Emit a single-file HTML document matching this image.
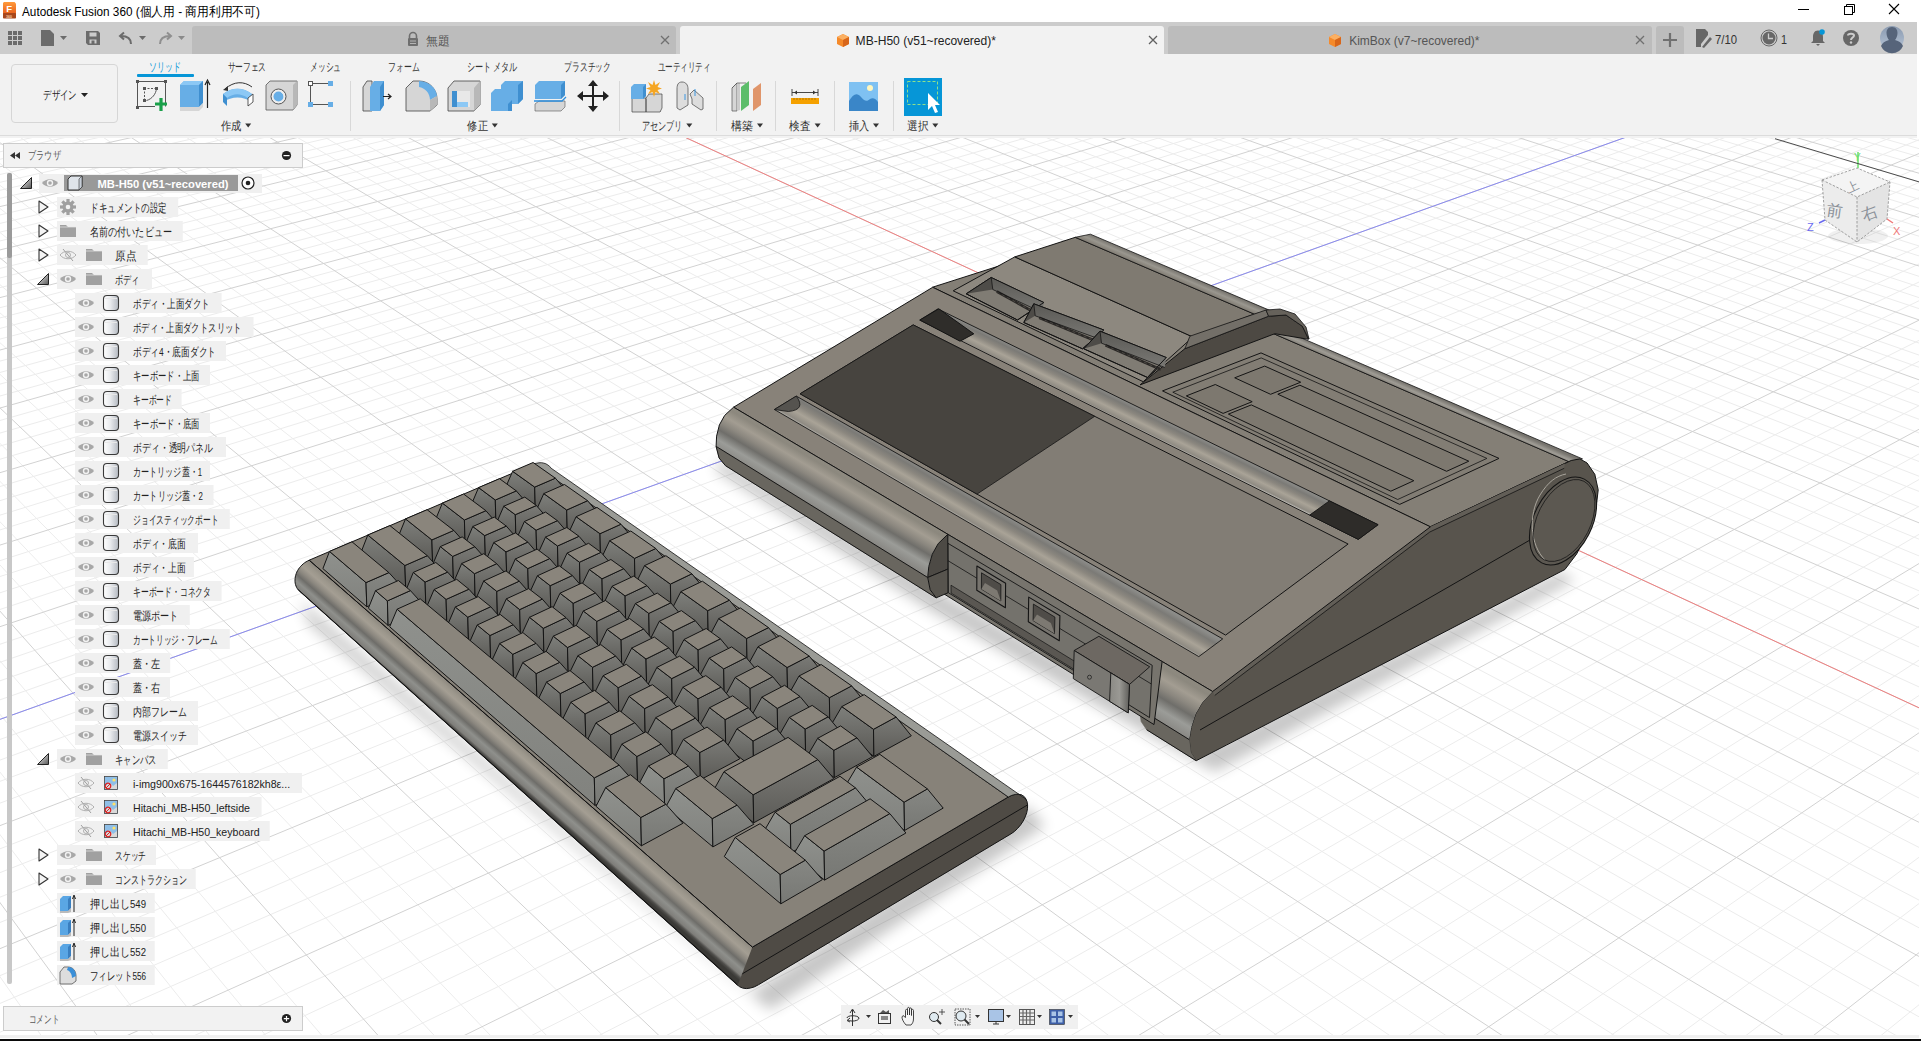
<!DOCTYPE html>
<html><head><meta charset="utf-8"><style>
html,body{margin:0;padding:0;width:1921px;height:1041px;overflow:hidden;background:#fff;font-family:"Liberation Sans", sans-serif}
div{box-sizing:border-box}
</style></head><body>
<div style="position:absolute;left:0;top:138px;width:1919px;height:897px;background:#ffffff"></div>
<svg style="position:absolute;left:0;top:0" width="1921" height="1041">
<defs><clipPath id="vp"><rect x="0" y="138" width="1919" height="897"/></clipPath></defs>
<g clip-path="url(#vp)">
<path d="M-798.3 230.3L1044.9 -136.5M-795.5 237.1L1054.7 -133.9M-792.6 244.0L1064.6 -131.2M-789.7 251.0L1074.5 -128.6M-783.8 265.2L1094.7 -123.2M-780.8 272.5L1104.9 -120.5M-777.7 279.8L1115.2 -117.8M-774.6 287.3L1125.6 -115.0M-768.2 302.7L1146.7 -109.4M-765.0 310.5L1157.3 -106.5M-761.7 318.4L1168.1 -103.7M-758.3 326.5L1179.0 -100.8M-751.5 343.0L1201.1 -94.9M-748.0 351.5L1212.3 -91.9M-744.4 360.1L1223.5 -88.9M-740.8 368.8L1234.9 -85.9M-733.4 386.7L1258.1 -79.7M-729.6 395.8L1269.8 -76.6M-725.7 405.2L1281.6 -73.5M-721.8 414.6L1293.6 -70.3M-713.7 434.0L1317.8 -63.8M-709.6 444.0L1330.1 -60.6M-705.4 454.1L1342.6 -57.3M-701.1 464.4L1355.1 -53.9M-692.3 485.6L1380.6 -47.1M-687.8 496.4L1393.5 -43.7M-683.2 507.5L1406.6 -40.2M-678.5 518.7L1419.7 -36.7M-668.9 541.8L1446.5 -29.6M-664.0 553.7L1460.1 -26.0M-659.0 565.8L1473.9 -22.3M-653.8 578.2L1487.7 -18.6M-643.3 603.6L1515.9 -11.1M-637.9 616.6L1530.3 -7.3M-632.3 630.0L1544.7 -3.4M-626.7 643.6L1559.4 0.5M-615.1 671.6L1589.1 8.4M-609.1 686.0L1604.2 12.4M-602.9 700.8L1619.5 16.4M-596.7 715.8L1634.9 20.6M-583.8 746.9L1666.3 28.9M-577.1 762.9L1682.3 33.2M-570.3 779.3L1698.4 37.5M-563.4 796.0L1714.7 41.8M-549.0 830.7L1747.9 50.6M-541.6 848.6L1764.8 55.1M-533.9 866.9L1781.9 59.7M-526.2 885.7L1799.1 64.3M-510.0 924.6L1834.3 73.6M-501.6 944.7L1852.2 78.4M-493.1 965.4L1870.3 83.2M-484.3 986.5L1888.6 88.1M-466.0 1030.5L1925.9 98.0M-456.6 1053.3L1944.9 103.1M-446.9 1076.7L1964.1 108.2M-436.9 1100.7L1983.6 113.4M-416.1 1150.8L2023.2 123.9M-405.3 1176.8L2043.4 129.3M-394.1 1203.6L2063.9 134.7M-382.7 1231.2L2084.6 140.2M-358.8 1288.7L2126.8 151.5M-346.3 1318.8L2148.3 157.2M-333.5 1349.7L2170.1 163.0M-320.2 1381.6L2192.2 168.9M-292.5 1448.4L2237.3 180.9M-278.0 1483.4L2260.2 187.0M-262.9 1519.6L2283.5 193.2M-247.4 1557.0L2307.1 199.5M-214.8 1635.5L2355.3 212.3M-197.6 1676.9L2379.9 218.8M-179.9 1719.7L2404.8 225.5M-161.4 1764.1L2430.1 232.2M-122.5 1857.8L2481.7 245.9M-102.0 1907.3L2508.1 253.0M-80.6 1958.8L2534.9 260.1M-58.4 2012.3L2562.0 267.3M-11.2 2126.0L2617.5 282.1M13.9 2186.4L2645.9 289.6M40.1 2249.5L2674.7 297.3M67.5 2315.3L2703.9 305.1M125.9 2456.2L2763.7 321.0M157.2 2531.6L2794.3 329.1M190.1 2610.6L2825.4 337.4M224.5 2693.6L2856.9 345.8M298.8 2872.5L2921.5 363.0M339.0 2969.2L2954.6 371.8M381.3 3071.2L2988.2 380.7M426.0 3178.9L3022.4 389.8M-773.1 218.2L558.5 3197.7M-745.6 212.7L639.7 3106.7M-718.3 207.3L717.2 3019.9M-691.3 202.0L791.3 2936.9M-638.3 191.5L930.1 2781.5M-612.2 186.4L995.2 2708.6M-586.5 181.3L1057.6 2638.7M-561.0 176.2L1117.6 2571.5M-510.8 166.3L1230.6 2444.9M-486.1 161.5L1283.9 2385.1M-461.7 156.6L1335.3 2327.6M-437.5 151.9L1384.8 2272.2M-390.0 142.5L1478.7 2167.0M-366.6 137.8L1523.2 2117.2M-343.4 133.3L1566.2 2069.0M-320.5 128.7L1607.8 2022.4M-275.4 119.8L1686.9 1933.8M-253.1 115.4L1724.6 1891.6M-231.1 111.1L1761.1 1850.6M-209.4 106.8L1796.6 1811.0M-166.5 98.3L1864.2 1735.2M-145.4 94.2L1896.6 1699.0M-124.4 90.0L1928.0 1663.8M-103.7 85.9L1958.5 1629.6M-62.9 77.9L2017.0 1564.1M-42.8 73.9L2045.1 1532.7M-22.9 70.0L2072.4 1502.1M-3.2 66.1L2098.9 1472.3M35.7 58.4L2150.0 1415.1M54.8 54.6L2174.6 1387.6M73.8 50.9L2198.5 1360.8M92.6 47.1L2221.9 1334.6M129.7 39.8L2266.9 1284.2M148.0 36.2L2288.6 1259.9M166.1 32.6L2309.7 1236.2M184.0 29.1L2330.4 1213.1M219.4 22.1L2370.3 1168.3M236.9 18.7L2389.6 1146.7M254.2 15.2L2408.5 1125.6M271.4 11.8L2426.9 1105.0M305.2 5.2L2462.6 1065.0M321.9 1.9L2479.9 1045.7M338.4 -1.4L2496.8 1026.7M354.8 -4.6L2513.3 1008.2M387.2 -11.0L2545.4 972.3M403.2 -14.2L2560.9 954.9M419.0 -17.3L2576.1 937.8M434.7 -20.4L2591.1 921.1M465.7 -26.5L2620.0 888.6M481.0 -29.6L2634.1 872.9M496.2 -32.6L2647.9 857.4M511.3 -35.5L2661.5 842.3M541.0 -41.4L2687.8 812.8M555.7 -44.3L2700.6 798.5M570.2 -47.2L2713.1 784.4M584.6 -50.0L2725.5 770.6M613.2 -55.7L2749.5 743.7M627.2 -58.4L2761.1 730.6M641.2 -61.2L2772.6 717.7M655.1 -63.9L2783.9 705.1M682.4 -69.4L2805.9 680.5M696.0 -72.0L2816.6 668.5M709.4 -74.7L2827.1 656.7M722.7 -77.3L2837.5 645.1M749.0 -82.5L2857.7 622.4M762.0 -85.1L2867.6 611.4M774.9 -87.6L2877.3 600.5M787.7 -90.1L2886.8 589.8M813.0 -95.1L2905.5 569.0M825.5 -97.6L2914.6 558.8M837.9 -100.1L2923.5 548.7M850.2 -102.5L2932.4 538.8M874.6 -107.3L2949.6 519.5M886.6 -109.7L2958.0 510.1M898.6 -112.0L2966.3 500.8M910.4 -114.4L2974.5 491.6M933.9 -119.0L2990.5 473.7M945.5 -121.3L2998.4 464.9M957.0 -123.6L3006.1 456.3M968.4 -125.8L3013.7 447.8M991.0 -130.3L3028.6 431.1M1002.2 -132.5L3035.9 422.9M1013.3 -134.7L3043.1 414.9M1024.3 -136.9L3050.1 406.9" stroke="#ececec" stroke-width="1" fill="none"/>
<path d="M-801.0 223.7L1035.2 -139.0M-786.8 258.0L1084.6 -125.9M-771.5 294.9L1136.1 -112.2M-754.9 334.7L1190.0 -97.9M-737.1 377.7L1246.4 -82.8M-717.8 424.2L1305.6 -67.1M-696.7 474.9L1367.8 -50.5M-673.8 530.2L1433.1 -33.2M-648.6 590.7L1501.8 -14.9M-620.9 657.4L1574.1 4.4M-590.3 731.2L1650.5 24.7M-556.3 813.2L1731.2 46.2M-518.2 904.9L1816.6 68.9M-475.3 1008.2L1907.1 93.0M-426.6 1125.4L2003.3 118.6M-370.9 1259.5L2105.6 145.8M-306.6 1414.5L2214.6 174.8M-231.4 1595.6L2331.0 205.8M-142.3 1810.0L2455.7 239.0M-35.2 2068.0L2589.6 274.6M96.0 2384.2L2733.6 313.0M260.7 2780.8L2889.0 354.3M473.4 3293.0L3057.1 399.1M-801.0 223.7L473.4 3293.0M-664.7 196.7L862.2 2857.5M-535.7 171.3L1175.2 2507.0M-413.6 147.1L1432.6 2218.7M-297.8 124.3L1648.0 1977.4M-187.8 102.5L1830.9 1772.5M-83.2 81.9L1988.2 1596.4M16.3 62.2L2124.8 1443.3M111.3 43.5L2244.6 1309.1M201.8 25.6L2350.6 1190.4M288.4 8.5L2444.9 1084.8M371.1 -7.9L2529.5 990.1M450.3 -23.5L2605.7 904.7M526.2 -38.5L2674.7 827.4M599.0 -52.9L2737.6 757.0M668.8 -66.7L2795.0 692.7M735.9 -79.9L2847.7 633.7M800.4 -92.6L2896.2 579.3M862.4 -104.9L2941.0 529.1M922.2 -116.7L2982.6 482.6M979.7 -128.1L3021.2 439.4M1035.2 -139.0L3057.1 399.1" stroke="#d2d2d2" stroke-width="1" fill="none"/>
<path d="M371.1 -7.9L2529.5 990.1" stroke="#f08080" stroke-width="1"/>
<path d="M-518.2 904.9L1816.6 68.9" stroke="#8a8af0" stroke-width="1"/>
<defs>
<linearGradient id="kf" x1="0" y1="0" x2="0" y2="1"><stop offset="0" stop-color="#7e7f7b"/><stop offset="1" stop-color="#5a5955"/></linearGradient>
<linearGradient id="kr" x1="0" y1="0" x2="0" y2="1"><stop offset="0" stop-color="#7a7a76"/><stop offset="1" stop-color="#5c5b57"/></linearGradient>
<linearGradient id="kf2" x1="0" y1="0" x2="0" y2="1"><stop offset="0" stop-color="#8f918d"/><stop offset="1" stop-color="#81827e"/></linearGradient>
<linearGradient id="kr2" x1="0" y1="0" x2="0" y2="1"><stop offset="0" stop-color="#868783"/><stop offset="1" stop-color="#777874"/></linearGradient>
<linearGradient id="slotwall" x1="0" y1="0" x2="0" y2="1"><stop offset="0" stop-color="#5a5955"/><stop offset="1" stop-color="#7a7975"/></linearGradient>
<linearGradient id="ubface" x1="0" y1="0" x2="1" y2="0"><stop offset="0" stop-color="#5e5a53"/><stop offset="0.7" stop-color="#55514a"/><stop offset="1" stop-color="#66625b"/></linearGradient>
<linearGradient id="swend" x1="0" y1="0" x2="1" y2="0"><stop offset="0" stop-color="#8a8984"/><stop offset="0.5" stop-color="#9a9994"/><stop offset="1" stop-color="#5f5e5a"/></linearGradient>
<filter id="blur8" x="-20%" y="-20%" width="140%" height="140%"><feGaussianBlur stdDeviation="7"/></filter>
</defs><g filter="url(#blur8)" opacity="0.22">
<polygon points="300.0,600.0 752.0,992.0 1027.0,806.0 1045.0,826.0 770.0,1010.0 310.0,625.0" fill="#000" />
<polygon points="722.0,460.0 940.0,592.0 1157.0,712.0 1197.0,752.0 1560.0,572.0 1575.0,580.0 1215.0,772.0 1140.0,730.0 930.0,610.0 715.0,470.0" fill="#000" />
</g><polygon points="752.4,947.1 1008.3,797.0 1011.8,795.3 1015.3,794.4 1018.6,794.3 1021.5,795.0 1023.9,796.5 1025.7,798.7 1027.0,801.5 1027.6,804.9 1027.5,808.7 1026.7,812.8 1025.2,816.9 1023.2,821.0 1020.6,824.9 1017.6,828.4 1014.4,831.5 1010.9,833.9 758.4,984.8 754.3,986.9 750.2,988.1 746.3,988.6 742.8,988.1 739.7,986.8 737.2,984.8 735.4,981.9 734.4,978.5 734.2,974.6 734.8,970.3 736.2,965.9 738.4,961.4 741.2,957.2 744.6,953.3 748.3,949.8" fill="#4f4b45" stroke="#141414" stroke-width="1.0" stroke-linejoin="round" />
<path d="M734.4 978.5L1027.6 804.9" stroke="#141414" stroke-width="1"/>
<defs><linearGradient id="g1" gradientUnits="userSpaceOnUse" x1="530.8" y1="753.6" x2="508.4" y2="779.3"><stop offset="0.000" stop-color="#8d887f"/><stop offset="0.140" stop-color="#9c978c"/><stop offset="0.260" stop-color="#a49e93"/><stop offset="0.420" stop-color="#8b877f"/><stop offset="0.550" stop-color="#6e6d69"/><stop offset="0.700" stop-color="#8f908c"/><stop offset="0.860" stop-color="#7f7e7a"/><stop offset="0.930" stop-color="#4e4d4a"/><stop offset="1.000" stop-color="#3a3936"/></linearGradient></defs><polygon points="309.2,560.2 752.4,947.1 737.7,985.3 299.2,590.8 298.2,589.8 297.3,588.6 296.6,587.4 296.0,586.0 295.5,584.6 295.2,583.1 295.0,581.6 295.0,580.1 295.1,578.5 295.3,576.9 295.7,575.3 296.2,573.7 296.8,572.1 297.6,570.6 298.5,569.1 299.5,567.7 300.7,566.3 301.9,565.1 303.2,563.9 304.6,562.8 306.1,561.8 307.6,561.0 309.2,560.2" fill="url(#g1)" />
<path d="M297.7 589.1L736.2 983.4" stroke="#141414" stroke-width="0.7"/>
<path d="M298.5 590.1L737.0 984.5" stroke="#141414" stroke-width="0.7"/>
<polyline points="309.2,560.2 307.6,561.0 306.1,561.8 304.6,562.8 303.2,563.9 301.9,565.1 300.7,566.3 299.5,567.7 298.5,569.1 297.6,570.6 296.8,572.1 296.2,573.7 295.7,575.3 295.3,576.9 295.1,578.5 295.0,580.1 295.0,581.6 295.2,583.1 295.5,584.6 296.0,586.0 296.6,587.4 297.3,588.6 298.2,589.8 299.2,590.8" fill="none" stroke="#141414" stroke-width="1"/>
<path d="M299.2 590.8L737.7 985.3" stroke="#141414" stroke-width="1"/>
<polygon points="309.2,560.2 752.4,947.1 1008.3,797.0 533.8,464.1" fill="#878279" stroke="#141414" stroke-width="1.0" stroke-linejoin="round" />
<polygon points="533.8,464.1 536.3,463.3 538.9,462.8 541.3,462.7 543.7,463.1 545.9,463.8 547.9,465.0 549.7,466.4 551.1,468.2 1026.1,799.3 1024.8,797.4 1023.1,795.9 1021.2,794.9 1018.9,794.3 1016.4,794.3 1013.8,794.7 1011.1,795.6 1008.3,797.0" fill="#9a9b96" stroke="#141414" stroke-width="0.8" stroke-linejoin="round" />
<path d="M309.2 560.2L752.4 947.1" stroke="#141414" stroke-width="1"/>
<polygon points="505.3,488.1 535.3,510.0 534.7,487.1 512.6,471.3" fill="url(#kf)" stroke="#141414" stroke-width="1.0" stroke-linejoin="round" />
<polygon points="535.3,510.0 569.6,494.9 555.4,478.2 534.7,487.1" fill="url(#kr)" stroke="#141414" stroke-width="1.0" stroke-linejoin="round" />
<polygon points="512.6,471.3 534.7,487.1 555.4,478.2 533.1,462.5" fill="#8a857c" stroke="#141414" stroke-width="1.0" stroke-linejoin="round" />
<polygon points="536.1,510.6 567.3,533.3 566.7,510.0 543.8,493.6" fill="url(#kf)" stroke="#141414" stroke-width="1.0" stroke-linejoin="round" />
<polygon points="567.3,533.3 601.9,517.7 587.6,500.7 566.7,510.0" fill="url(#kr)" stroke="#141414" stroke-width="1.0" stroke-linejoin="round" />
<polygon points="543.8,493.6 566.7,510.0 587.6,500.7 564.5,484.5" fill="#8a857c" stroke="#141414" stroke-width="1.0" stroke-linejoin="round" />
<polygon points="568.2,533.9 600.5,557.4 600.0,533.7 576.1,516.7" fill="url(#kf)" stroke="#141414" stroke-width="1.0" stroke-linejoin="round" />
<polygon points="600.5,557.4 635.5,541.4 621.0,524.2 600.0,533.7" fill="url(#kr)" stroke="#141414" stroke-width="1.0" stroke-linejoin="round" />
<polygon points="576.1,516.7 600.0,533.7 621.0,524.2 597.0,507.4" fill="#8a857c" stroke="#141414" stroke-width="1.0" stroke-linejoin="round" />
<polygon points="601.4,558.1 635.0,582.5 634.5,558.4 609.7,540.7" fill="url(#kf)" stroke="#141414" stroke-width="1.0" stroke-linejoin="round" />
<polygon points="635.0,582.5 670.3,565.9 655.8,548.5 634.5,558.4" fill="url(#kr)" stroke="#141414" stroke-width="1.0" stroke-linejoin="round" />
<polygon points="609.7,540.7 634.5,558.4 655.8,548.5 630.8,531.0" fill="#8a857c" stroke="#141414" stroke-width="1.0" stroke-linejoin="round" />
<polygon points="635.9,583.2 670.9,608.6 670.4,584.1 644.6,565.6" fill="url(#kf)" stroke="#141414" stroke-width="1.0" stroke-linejoin="round" />
<polygon points="670.9,608.6 706.5,591.5 691.9,573.8 670.4,584.1" fill="url(#kr)" stroke="#141414" stroke-width="1.0" stroke-linejoin="round" />
<polygon points="644.6,565.6 670.4,584.1 691.9,573.8 665.9,555.7" fill="#8a857c" stroke="#141414" stroke-width="1.0" stroke-linejoin="round" />
<polygon points="671.8,609.3 708.2,635.8 707.7,610.7 680.9,591.6" fill="url(#kf)" stroke="#141414" stroke-width="1.0" stroke-linejoin="round" />
<polygon points="708.2,635.8 744.2,618.0 729.4,600.2 707.7,610.7" fill="url(#kr)" stroke="#141414" stroke-width="1.0" stroke-linejoin="round" />
<polygon points="680.9,591.6 707.7,610.7 729.4,600.2 702.4,581.2" fill="#8a857c" stroke="#141414" stroke-width="1.0" stroke-linejoin="round" />
<polygon points="709.2,636.5 747.1,664.1 746.6,638.5 718.7,618.6" fill="url(#kf)" stroke="#141414" stroke-width="1.0" stroke-linejoin="round" />
<polygon points="747.1,664.1 783.4,645.6 768.5,627.6 746.6,638.5" fill="url(#kr)" stroke="#141414" stroke-width="1.0" stroke-linejoin="round" />
<polygon points="718.7,618.6 746.6,638.5 768.5,627.6 740.4,607.9" fill="#8a857c" stroke="#141414" stroke-width="1.0" stroke-linejoin="round" />
<polygon points="748.1,664.8 787.6,693.6 787.1,667.5 758.0,646.7" fill="url(#kf)" stroke="#141414" stroke-width="1.0" stroke-linejoin="round" />
<polygon points="787.6,693.6 824.3,674.4 809.2,656.1 787.1,667.5" fill="url(#kr)" stroke="#141414" stroke-width="1.0" stroke-linejoin="round" />
<polygon points="758.0,646.7 787.1,667.5 809.2,656.1 780.0,635.6" fill="#8a857c" stroke="#141414" stroke-width="1.0" stroke-linejoin="round" />
<polygon points="788.7,694.4 829.8,724.3 829.4,697.7 799.0,676.0" fill="url(#kf)" stroke="#141414" stroke-width="1.0" stroke-linejoin="round" />
<polygon points="829.8,724.3 866.9,704.5 851.7,685.9 829.4,697.7" fill="url(#kr)" stroke="#141414" stroke-width="1.0" stroke-linejoin="round" />
<polygon points="799.0,676.0 829.4,697.7 851.7,685.9 821.2,664.5" fill="#8a857c" stroke="#141414" stroke-width="1.0" stroke-linejoin="round" />
<polygon points="831.0,725.1 873.9,756.4 873.5,729.3 841.8,706.6" fill="url(#kf)" stroke="#141414" stroke-width="1.0" stroke-linejoin="round" />
<polygon points="873.9,756.4 911.3,735.8 896.1,717.0 873.5,729.3" fill="url(#kr)" stroke="#141414" stroke-width="1.0" stroke-linejoin="round" />
<polygon points="841.8,706.6 873.5,729.3 896.1,717.0 864.2,694.6" fill="#8a857c" stroke="#141414" stroke-width="1.0" stroke-linejoin="round" />
<polygon points="471.4,504.5 495.9,523.0 495.3,500.0 478.6,487.6" fill="url(#kf)" stroke="#141414" stroke-width="1.0" stroke-linejoin="round" />
<polygon points="495.9,523.0 530.8,507.7 516.3,490.9 495.3,500.0" fill="url(#kr)" stroke="#141414" stroke-width="1.0" stroke-linejoin="round" />
<polygon points="478.6,487.6 495.3,500.0 516.3,490.9 499.5,478.7" fill="#8a857c" stroke="#141414" stroke-width="1.0" stroke-linejoin="round" />
<polygon points="496.3,523.3 515.9,538.0 515.3,514.7 503.8,506.2" fill="url(#kf)" stroke="#141414" stroke-width="1.0" stroke-linejoin="round" />
<polygon points="515.9,538.0 551.0,522.4 536.4,505.5 515.3,514.7" fill="url(#kr)" stroke="#141414" stroke-width="1.0" stroke-linejoin="round" />
<polygon points="503.8,506.2 515.3,514.7 536.4,505.5 524.8,497.1" fill="#8a857c" stroke="#141414" stroke-width="1.0" stroke-linejoin="round" />
<polygon points="516.7,538.6 536.7,553.7 536.1,530.2 524.4,521.5" fill="url(#kf)" stroke="#141414" stroke-width="1.0" stroke-linejoin="round" />
<polygon points="536.7,553.7 572.1,537.8 557.4,520.7 536.1,530.2" fill="url(#kr)" stroke="#141414" stroke-width="1.0" stroke-linejoin="round" />
<polygon points="524.4,521.5 536.1,530.2 557.4,520.7 545.6,512.1" fill="#8a857c" stroke="#141414" stroke-width="1.0" stroke-linejoin="round" />
<polygon points="537.6,554.4 558.1,569.8 557.5,546.0 545.5,537.1" fill="url(#kf)" stroke="#141414" stroke-width="1.0" stroke-linejoin="round" />
<polygon points="558.1,569.8 593.7,553.5 579.0,536.3 557.5,546.0" fill="url(#kr)" stroke="#141414" stroke-width="1.0" stroke-linejoin="round" />
<polygon points="545.5,537.1 557.5,546.0 579.0,536.3 566.8,527.5" fill="#8a857c" stroke="#141414" stroke-width="1.0" stroke-linejoin="round" />
<polygon points="559.0,570.5 580.1,586.3 579.5,562.2 567.1,553.1" fill="url(#kf)" stroke="#141414" stroke-width="1.0" stroke-linejoin="round" />
<polygon points="580.1,586.3 615.9,569.7 601.0,552.3 579.5,562.2" fill="url(#kr)" stroke="#141414" stroke-width="1.0" stroke-linejoin="round" />
<polygon points="567.1,553.1 579.5,562.2 601.0,552.3 588.6,543.3" fill="#8a857c" stroke="#141414" stroke-width="1.0" stroke-linejoin="round" />
<polygon points="580.9,587.0 602.5,603.3 602.0,578.8 589.3,569.5" fill="url(#kf)" stroke="#141414" stroke-width="1.0" stroke-linejoin="round" />
<polygon points="602.5,603.3 638.6,586.2 623.7,568.7 602.0,578.8" fill="url(#kr)" stroke="#141414" stroke-width="1.0" stroke-linejoin="round" />
<polygon points="589.3,569.5 602.0,578.8 623.7,568.7 610.9,559.5" fill="#8a857c" stroke="#141414" stroke-width="1.0" stroke-linejoin="round" />
<polygon points="603.5,603.9 625.6,620.6 625.1,595.9 612.0,586.3" fill="url(#kf)" stroke="#141414" stroke-width="1.0" stroke-linejoin="round" />
<polygon points="625.6,620.6 661.9,603.2 646.9,585.6 625.1,595.9" fill="url(#kr)" stroke="#141414" stroke-width="1.0" stroke-linejoin="round" />
<polygon points="612.0,586.3 625.1,595.9 646.9,585.6 633.8,576.1" fill="#8a857c" stroke="#141414" stroke-width="1.0" stroke-linejoin="round" />
<polygon points="626.6,621.3 649.3,638.5 648.8,613.4 635.4,603.5" fill="url(#kf)" stroke="#141414" stroke-width="1.0" stroke-linejoin="round" />
<polygon points="649.3,638.5 685.8,620.7 670.8,602.8 648.8,613.4" fill="url(#kr)" stroke="#141414" stroke-width="1.0" stroke-linejoin="round" />
<polygon points="635.4,603.5 648.8,613.4 670.8,602.8 657.3,593.1" fill="#8a857c" stroke="#141414" stroke-width="1.0" stroke-linejoin="round" />
<polygon points="650.3,639.2 673.6,656.8 673.1,631.4 659.3,621.3" fill="url(#kf)" stroke="#141414" stroke-width="1.0" stroke-linejoin="round" />
<polygon points="673.6,656.8 710.4,638.5 695.2,620.6 673.1,631.4" fill="url(#kr)" stroke="#141414" stroke-width="1.0" stroke-linejoin="round" />
<polygon points="659.3,621.3 673.1,631.4 695.2,620.6 681.4,610.6" fill="#8a857c" stroke="#141414" stroke-width="1.0" stroke-linejoin="round" />
<polygon points="674.6,657.5 698.6,675.6 698.1,649.9 684.0,639.5" fill="url(#kf)" stroke="#141414" stroke-width="1.0" stroke-linejoin="round" />
<polygon points="698.6,675.6 735.6,656.9 720.4,638.8 698.1,649.9" fill="url(#kr)" stroke="#141414" stroke-width="1.0" stroke-linejoin="round" />
<polygon points="684.0,639.5 698.1,649.9 720.4,638.8 706.2,628.5" fill="#8a857c" stroke="#141414" stroke-width="1.0" stroke-linejoin="round" />
<polygon points="699.6,676.3 724.2,694.9 723.7,668.9 709.2,658.1" fill="url(#kf)" stroke="#141414" stroke-width="1.0" stroke-linejoin="round" />
<polygon points="724.2,694.9 761.5,675.8 746.2,657.5 723.7,668.9" fill="url(#kr)" stroke="#141414" stroke-width="1.0" stroke-linejoin="round" />
<polygon points="709.2,658.1 723.7,668.9 746.2,657.5 731.6,646.9" fill="#8a857c" stroke="#141414" stroke-width="1.0" stroke-linejoin="round" />
<polygon points="725.3,695.7 750.6,714.7 750.1,688.4 735.2,677.4" fill="url(#kf)" stroke="#141414" stroke-width="1.0" stroke-linejoin="round" />
<polygon points="750.6,714.7 788.1,695.2 772.7,676.7 750.1,688.4" fill="url(#kr)" stroke="#141414" stroke-width="1.0" stroke-linejoin="round" />
<polygon points="735.2,677.4 750.1,688.4 772.7,676.7 757.7,665.9" fill="#8a857c" stroke="#141414" stroke-width="1.0" stroke-linejoin="round" />
<polygon points="751.7,715.5 777.7,735.1 777.3,708.4 761.9,697.1" fill="url(#kf)" stroke="#141414" stroke-width="1.0" stroke-linejoin="round" />
<polygon points="777.7,735.1 815.5,715.1 800.0,696.5 777.3,708.4" fill="url(#kr)" stroke="#141414" stroke-width="1.0" stroke-linejoin="round" />
<polygon points="761.9,697.1 777.3,708.4 800.0,696.5 784.6,685.3" fill="#8a857c" stroke="#141414" stroke-width="1.0" stroke-linejoin="round" />
<polygon points="778.8,736.0 805.6,756.1 805.2,729.1 789.4,717.4" fill="url(#kf)" stroke="#141414" stroke-width="1.0" stroke-linejoin="round" />
<polygon points="805.6,756.1 843.6,735.6 828.1,716.8 805.2,729.1" fill="url(#kr)" stroke="#141414" stroke-width="1.0" stroke-linejoin="round" />
<polygon points="789.4,717.4 805.2,729.1 828.1,716.8 812.2,705.4" fill="#8a857c" stroke="#141414" stroke-width="1.0" stroke-linejoin="round" />
<polygon points="806.7,757.0 834.3,777.7 833.9,750.3 817.7,738.3" fill="url(#kf)" stroke="#141414" stroke-width="1.0" stroke-linejoin="round" />
<polygon points="834.3,777.7 872.5,756.7 856.9,737.8 833.9,750.3" fill="url(#kr)" stroke="#141414" stroke-width="1.0" stroke-linejoin="round" />
<polygon points="817.7,738.3 833.9,750.3 856.9,737.8 840.6,725.9" fill="#8a857c" stroke="#141414" stroke-width="1.0" stroke-linejoin="round" />
<polygon points="845.3,786.0 904.5,830.5 904.1,802.2 856.6,767.1" fill="url(#kf2)" stroke="#141414" stroke-width="1.0" stroke-linejoin="round" />
<polygon points="904.5,830.5 943.2,808.1 927.4,788.9 904.1,802.2" fill="url(#kr2)" stroke="#141414" stroke-width="1.0" stroke-linejoin="round" />
<polygon points="856.6,767.1 904.1,802.2 927.4,788.9 879.8,754.3" fill="#8a857c" stroke="#141414" stroke-width="1.0" stroke-linejoin="round" />
<polygon points="435.3,520.1 465.1,543.3 464.4,520.0 442.4,503.1" fill="url(#kf)" stroke="#141414" stroke-width="1.0" stroke-linejoin="round" />
<polygon points="465.1,543.3 500.6,527.6 485.9,510.7 464.4,520.0" fill="url(#kr)" stroke="#141414" stroke-width="1.0" stroke-linejoin="round" />
<polygon points="442.4,503.1 464.4,520.0 485.9,510.7 463.6,494.0" fill="#8a857c" stroke="#141414" stroke-width="1.0" stroke-linejoin="round" />
<polygon points="465.5,543.6 485.4,559.1 484.7,535.6 472.8,526.5" fill="url(#kf)" stroke="#141414" stroke-width="1.0" stroke-linejoin="round" />
<polygon points="485.4,559.1 521.2,543.1 506.3,526.1 484.7,535.6" fill="url(#kr)" stroke="#141414" stroke-width="1.0" stroke-linejoin="round" />
<polygon points="472.8,526.5 484.7,535.6 506.3,526.1 494.3,517.1" fill="#8a857c" stroke="#141414" stroke-width="1.0" stroke-linejoin="round" />
<polygon points="486.2,559.8 506.7,575.7 506.0,551.9 493.8,542.5" fill="url(#kf)" stroke="#141414" stroke-width="1.0" stroke-linejoin="round" />
<polygon points="506.7,575.7 542.7,559.4 527.8,542.1 506.0,551.9" fill="url(#kr)" stroke="#141414" stroke-width="1.0" stroke-linejoin="round" />
<polygon points="493.8,542.5 506.0,551.9 527.8,542.1 515.5,532.9" fill="#8a857c" stroke="#141414" stroke-width="1.0" stroke-linejoin="round" />
<polygon points="507.5,576.4 528.5,592.7 527.8,568.6 515.3,559.0" fill="url(#kf)" stroke="#141414" stroke-width="1.0" stroke-linejoin="round" />
<polygon points="528.5,592.7 564.8,576.0 549.7,558.6 527.8,568.6" fill="url(#kr)" stroke="#141414" stroke-width="1.0" stroke-linejoin="round" />
<polygon points="515.3,559.0 527.8,568.6 549.7,558.6 537.1,549.1" fill="#8a857c" stroke="#141414" stroke-width="1.0" stroke-linejoin="round" />
<polygon points="529.3,593.4 550.8,610.2 550.2,585.7 537.4,575.8" fill="url(#kf)" stroke="#141414" stroke-width="1.0" stroke-linejoin="round" />
<polygon points="550.8,610.2 587.4,593.0 572.3,575.5 550.2,585.7" fill="url(#kr)" stroke="#141414" stroke-width="1.0" stroke-linejoin="round" />
<polygon points="537.4,575.8 550.2,585.7 572.3,575.5 559.3,565.8" fill="#8a857c" stroke="#141414" stroke-width="1.0" stroke-linejoin="round" />
<polygon points="551.7,610.8 573.8,628.1 573.2,603.3 560.0,593.2" fill="url(#kf)" stroke="#141414" stroke-width="1.0" stroke-linejoin="round" />
<polygon points="573.8,628.1 610.7,610.6 595.4,592.9 573.2,603.3" fill="url(#kr)" stroke="#141414" stroke-width="1.0" stroke-linejoin="round" />
<polygon points="560.0,593.2 573.2,603.3 595.4,592.9 582.1,582.9" fill="#8a857c" stroke="#141414" stroke-width="1.0" stroke-linejoin="round" />
<polygon points="574.7,628.8 597.4,646.5 596.8,621.4 583.3,611.0" fill="url(#kf)" stroke="#141414" stroke-width="1.0" stroke-linejoin="round" />
<polygon points="597.4,646.5 634.5,628.5 619.2,610.7 596.8,621.4" fill="url(#kr)" stroke="#141414" stroke-width="1.0" stroke-linejoin="round" />
<polygon points="583.3,611.0 596.8,621.4 619.2,610.7 605.5,600.5" fill="#8a857c" stroke="#141414" stroke-width="1.0" stroke-linejoin="round" />
<polygon points="598.4,647.2 621.7,665.4 621.1,639.9 607.1,629.3" fill="url(#kf)" stroke="#141414" stroke-width="1.0" stroke-linejoin="round" />
<polygon points="621.7,665.4 659.1,647.0 643.6,629.0 621.1,639.9" fill="url(#kr)" stroke="#141414" stroke-width="1.0" stroke-linejoin="round" />
<polygon points="607.1,629.3 621.1,639.9 643.6,629.0 629.6,618.5" fill="#8a857c" stroke="#141414" stroke-width="1.0" stroke-linejoin="round" />
<polygon points="622.6,666.1 646.6,684.8 646.0,659.0 631.7,648.1" fill="url(#kf)" stroke="#141414" stroke-width="1.0" stroke-linejoin="round" />
<polygon points="646.6,684.8 684.2,666.0 668.7,647.8 646.0,659.0" fill="url(#kr)" stroke="#141414" stroke-width="1.0" stroke-linejoin="round" />
<polygon points="631.7,648.1 646.0,659.0 668.7,647.8 654.3,637.0" fill="#8a857c" stroke="#141414" stroke-width="1.0" stroke-linejoin="round" />
<polygon points="647.6,685.5 672.2,704.7 671.7,678.6 656.9,667.4" fill="url(#kf)" stroke="#141414" stroke-width="1.0" stroke-linejoin="round" />
<polygon points="672.2,704.7 710.1,685.5 694.5,667.2 671.7,678.6" fill="url(#kr)" stroke="#141414" stroke-width="1.0" stroke-linejoin="round" />
<polygon points="656.9,667.4 671.7,678.6 694.5,667.2 679.7,656.1" fill="#8a857c" stroke="#141414" stroke-width="1.0" stroke-linejoin="round" />
<polygon points="673.2,705.5 698.6,725.3 698.0,698.8 682.9,687.2" fill="url(#kf)" stroke="#141414" stroke-width="1.0" stroke-linejoin="round" />
<polygon points="698.6,725.3 736.7,705.5 721.0,687.1 698.0,698.8" fill="url(#kr)" stroke="#141414" stroke-width="1.0" stroke-linejoin="round" />
<polygon points="682.9,687.2 698.0,698.8 721.0,687.1 705.8,675.6" fill="#8a857c" stroke="#141414" stroke-width="1.0" stroke-linejoin="round" />
<polygon points="699.6,726.1 725.7,746.4 725.2,719.6 709.6,707.7" fill="url(#kf)" stroke="#141414" stroke-width="1.0" stroke-linejoin="round" />
<polygon points="725.7,746.4 764.1,726.2 748.3,707.6 725.2,719.6" fill="url(#kr)" stroke="#141414" stroke-width="1.0" stroke-linejoin="round" />
<polygon points="709.6,707.7 725.2,719.6 748.3,707.6 732.6,695.8" fill="#8a857c" stroke="#141414" stroke-width="1.0" stroke-linejoin="round" />
<polygon points="726.8,747.3 753.6,768.2 753.1,741.0 737.0,728.7" fill="url(#kf)" stroke="#141414" stroke-width="1.0" stroke-linejoin="round" />
<polygon points="753.6,768.2 792.3,747.4 776.4,728.6 753.1,741.0" fill="url(#kr)" stroke="#141414" stroke-width="1.0" stroke-linejoin="round" />
<polygon points="737.0,728.7 753.1,741.0 776.4,728.6 760.3,716.5" fill="#8a857c" stroke="#141414" stroke-width="1.0" stroke-linejoin="round" />
<polygon points="713.5,790.4 753.7,822.8 753.2,794.8 724.0,771.6" fill="url(#kf)" stroke="#141414" stroke-width="1.0" stroke-linejoin="round" />
<polygon points="753.7,822.8 833.8,778.6 817.8,759.6 753.2,794.8" fill="url(#kr)" stroke="#141414" stroke-width="1.0" stroke-linejoin="round" />
<polygon points="724.0,771.6 753.2,794.8 817.8,759.6 788.1,737.4" fill="#8a857c" stroke="#141414" stroke-width="1.0" stroke-linejoin="round" />
<polygon points="764.0,831.2 790.9,852.9 790.4,824.3 775.1,812.2" fill="url(#kf2)" stroke="#141414" stroke-width="1.0" stroke-linejoin="round" />
<polygon points="790.9,852.9 871.6,807.2 855.5,787.9 790.4,824.3" fill="url(#kr2)" stroke="#141414" stroke-width="1.0" stroke-linejoin="round" />
<polygon points="775.1,812.2 790.4,824.3 855.5,787.9 840.0,776.3" fill="#8a857c" stroke="#141414" stroke-width="1.0" stroke-linejoin="round" />
<polygon points="793.3,854.8 824.6,880.1 824.1,851.1 804.7,835.7" fill="url(#kf2)" stroke="#141414" stroke-width="1.0" stroke-linejoin="round" />
<polygon points="824.6,880.1 905.9,833.0 889.8,813.6 824.1,851.1" fill="url(#kr2)" stroke="#141414" stroke-width="1.0" stroke-linejoin="round" />
<polygon points="804.7,835.7 824.1,851.1 889.8,813.6 870.1,798.8" fill="#8a857c" stroke="#141414" stroke-width="1.0" stroke-linejoin="round" />
<polygon points="398.5,536.0 432.6,563.5 431.9,539.9 405.5,518.9" fill="url(#kf)" stroke="#141414" stroke-width="1.0" stroke-linejoin="round" />
<polygon points="432.6,563.5 468.9,547.5 453.8,530.4 431.9,539.9" fill="url(#kr)" stroke="#141414" stroke-width="1.0" stroke-linejoin="round" />
<polygon points="405.5,518.9 431.9,539.9 453.8,530.4 427.1,509.7" fill="#8a857c" stroke="#141414" stroke-width="1.0" stroke-linejoin="round" />
<polygon points="433.0,563.8 453.4,580.3 452.7,556.4 440.3,546.6" fill="url(#kf)" stroke="#141414" stroke-width="1.0" stroke-linejoin="round" />
<polygon points="453.4,580.3 490.0,563.9 474.8,546.7 452.7,556.4" fill="url(#kr)" stroke="#141414" stroke-width="1.0" stroke-linejoin="round" />
<polygon points="440.3,546.6 452.7,556.4 474.8,546.7 462.2,536.9" fill="#8a857c" stroke="#141414" stroke-width="1.0" stroke-linejoin="round" />
<polygon points="454.2,580.9 475.1,597.8 474.5,573.7 461.7,563.5" fill="url(#kf)" stroke="#141414" stroke-width="1.0" stroke-linejoin="round" />
<polygon points="475.1,597.8 512.0,581.0 496.7,563.7 474.5,573.7" fill="url(#kr)" stroke="#141414" stroke-width="1.0" stroke-linejoin="round" />
<polygon points="461.7,563.5 474.5,573.7 496.7,563.7 483.8,553.7" fill="#8a857c" stroke="#141414" stroke-width="1.0" stroke-linejoin="round" />
<polygon points="476.0,598.5 497.4,615.9 496.8,591.4 483.7,581.0" fill="url(#kf)" stroke="#141414" stroke-width="1.0" stroke-linejoin="round" />
<polygon points="497.4,615.9 534.6,598.7 519.2,581.2 496.8,591.4" fill="url(#kr)" stroke="#141414" stroke-width="1.0" stroke-linejoin="round" />
<polygon points="483.7,581.0 496.8,591.4 519.2,581.2 506.0,570.9" fill="#8a857c" stroke="#141414" stroke-width="1.0" stroke-linejoin="round" />
<polygon points="498.3,616.5 520.4,634.4 519.7,609.6 506.3,598.9" fill="url(#kf)" stroke="#141414" stroke-width="1.0" stroke-linejoin="round" />
<polygon points="520.4,634.4 557.8,616.8 542.3,599.1 519.7,609.6" fill="url(#kr)" stroke="#141414" stroke-width="1.0" stroke-linejoin="round" />
<polygon points="506.3,598.9 519.7,609.6 542.3,599.1 528.7,588.6" fill="#8a857c" stroke="#141414" stroke-width="1.0" stroke-linejoin="round" />
<polygon points="521.3,635.1 543.9,653.4 543.3,628.3 529.5,617.3" fill="url(#kf)" stroke="#141414" stroke-width="1.0" stroke-linejoin="round" />
<polygon points="543.9,653.4 581.7,635.4 566.0,617.6 543.3,628.3" fill="url(#kr)" stroke="#141414" stroke-width="1.0" stroke-linejoin="round" />
<polygon points="529.5,617.3 543.3,628.3 566.0,617.6 552.1,606.7" fill="#8a857c" stroke="#141414" stroke-width="1.0" stroke-linejoin="round" />
<polygon points="544.9,654.1 568.2,673.0 567.5,647.5 553.3,636.2" fill="url(#kf)" stroke="#141414" stroke-width="1.0" stroke-linejoin="round" />
<polygon points="568.2,673.0 606.2,654.5 590.5,636.5 567.5,647.5" fill="url(#kr)" stroke="#141414" stroke-width="1.0" stroke-linejoin="round" />
<polygon points="553.3,636.2 567.5,647.5 590.5,636.5 576.1,625.4" fill="#8a857c" stroke="#141414" stroke-width="1.0" stroke-linejoin="round" />
<polygon points="569.1,673.7 593.1,693.1 592.5,667.3 577.9,655.7" fill="url(#kf)" stroke="#141414" stroke-width="1.0" stroke-linejoin="round" />
<polygon points="593.1,693.1 631.4,674.2 615.6,656.0 592.5,667.3" fill="url(#kr)" stroke="#141414" stroke-width="1.0" stroke-linejoin="round" />
<polygon points="577.9,655.7 592.5,667.3 615.6,656.0 600.8,644.6" fill="#8a857c" stroke="#141414" stroke-width="1.0" stroke-linejoin="round" />
<polygon points="594.1,693.9 618.8,713.8 618.2,687.7 603.1,675.7" fill="url(#kf)" stroke="#141414" stroke-width="1.0" stroke-linejoin="round" />
<polygon points="618.8,713.8 657.3,694.4 641.4,676.1 618.2,687.7" fill="url(#kr)" stroke="#141414" stroke-width="1.0" stroke-linejoin="round" />
<polygon points="603.1,675.7 618.2,687.7 641.4,676.1 626.3,664.3" fill="#8a857c" stroke="#141414" stroke-width="1.0" stroke-linejoin="round" />
<polygon points="619.7,714.6 645.2,735.2 644.6,708.6 629.1,696.3" fill="url(#kf)" stroke="#141414" stroke-width="1.0" stroke-linejoin="round" />
<polygon points="645.2,735.2 684.0,715.2 668.0,696.8 644.6,708.6" fill="url(#kr)" stroke="#141414" stroke-width="1.0" stroke-linejoin="round" />
<polygon points="629.1,696.3 644.6,708.6 668.0,696.8 652.4,684.7" fill="#8a857c" stroke="#141414" stroke-width="1.0" stroke-linejoin="round" />
<polygon points="646.2,736.0 672.4,757.1 671.8,730.2 655.8,717.6" fill="url(#kf)" stroke="#141414" stroke-width="1.0" stroke-linejoin="round" />
<polygon points="672.4,757.1 711.5,736.7 695.4,718.1 671.8,730.2" fill="url(#kr)" stroke="#141414" stroke-width="1.0" stroke-linejoin="round" />
<polygon points="655.8,717.6 671.8,730.2 695.4,718.1 679.3,705.6" fill="#8a857c" stroke="#141414" stroke-width="1.0" stroke-linejoin="round" />
<polygon points="673.4,758.0 700.4,779.8 699.8,752.5 683.4,739.4" fill="url(#kf)" stroke="#141414" stroke-width="1.0" stroke-linejoin="round" />
<polygon points="700.4,779.8 739.8,758.8 723.6,740.0 699.8,752.5" fill="url(#kr)" stroke="#141414" stroke-width="1.0" stroke-linejoin="round" />
<polygon points="683.4,739.4 699.8,752.5 723.6,740.0 707.1,727.1" fill="#8a857c" stroke="#141414" stroke-width="1.0" stroke-linejoin="round" />
<polygon points="361.1,552.1 405.7,589.5 404.9,565.5 367.8,535.0" fill="url(#kf)" stroke="#141414" stroke-width="1.0" stroke-linejoin="round" />
<polygon points="405.7,589.5 442.8,572.9 427.3,555.7 404.9,565.5" fill="url(#kr)" stroke="#141414" stroke-width="1.0" stroke-linejoin="round" />
<polygon points="367.8,535.0 404.9,565.5 427.3,555.7 389.9,525.6" fill="#8a857c" stroke="#141414" stroke-width="1.0" stroke-linejoin="round" />
<polygon points="406.1,589.8 425.8,606.3 425.1,582.1 413.3,572.4" fill="url(#kf)" stroke="#141414" stroke-width="1.0" stroke-linejoin="round" />
<polygon points="425.8,606.3 463.2,589.4 447.6,572.1 425.1,582.1" fill="url(#kr)" stroke="#141414" stroke-width="1.0" stroke-linejoin="round" />
<polygon points="413.3,572.4 425.1,582.1 447.6,572.1 435.8,562.5" fill="#8a857c" stroke="#141414" stroke-width="1.0" stroke-linejoin="round" />
<polygon points="426.6,607.0 446.8,624.0 446.1,599.4 434.1,589.5" fill="url(#kf)" stroke="#141414" stroke-width="1.0" stroke-linejoin="round" />
<polygon points="446.8,624.0 484.6,606.7 468.9,589.2 446.1,599.4" fill="url(#kr)" stroke="#141414" stroke-width="1.0" stroke-linejoin="round" />
<polygon points="434.1,589.5 446.1,599.4 468.9,589.2 456.7,579.3" fill="#8a857c" stroke="#141414" stroke-width="1.0" stroke-linejoin="round" />
<polygon points="447.7,624.7 468.5,642.1 467.8,617.2 455.3,607.0" fill="url(#kf)" stroke="#141414" stroke-width="1.0" stroke-linejoin="round" />
<polygon points="468.5,642.1 506.5,624.4 490.7,606.7 467.8,617.2" fill="url(#kr)" stroke="#141414" stroke-width="1.0" stroke-linejoin="round" />
<polygon points="455.3,607.0 467.8,617.2 490.7,606.7 478.2,596.6" fill="#8a857c" stroke="#141414" stroke-width="1.0" stroke-linejoin="round" />
<polygon points="469.3,642.8 490.6,660.7 490.0,635.5 477.2,625.0" fill="url(#kf)" stroke="#141414" stroke-width="1.0" stroke-linejoin="round" />
<polygon points="490.6,660.7 529.0,642.6 513.1,624.7 490.0,635.5" fill="url(#kr)" stroke="#141414" stroke-width="1.0" stroke-linejoin="round" />
<polygon points="477.2,625.0 490.0,635.5 513.1,624.7 500.2,614.4" fill="#8a857c" stroke="#141414" stroke-width="1.0" stroke-linejoin="round" />
<polygon points="491.5,661.4 513.5,679.8 512.8,654.3 499.7,643.5" fill="url(#kf)" stroke="#141414" stroke-width="1.0" stroke-linejoin="round" />
<polygon points="513.5,679.8 552.1,661.2 536.0,643.3 512.8,654.3" fill="url(#kr)" stroke="#141414" stroke-width="1.0" stroke-linejoin="round" />
<polygon points="499.7,643.5 512.8,654.3 536.0,643.3 522.9,632.6" fill="#8a857c" stroke="#141414" stroke-width="1.0" stroke-linejoin="round" />
<polygon points="514.4,680.6 536.9,699.4 536.2,673.6 522.8,662.5" fill="url(#kf)" stroke="#141414" stroke-width="1.0" stroke-linejoin="round" />
<polygon points="536.9,699.4 575.8,680.4 559.7,662.3 536.2,673.6" fill="url(#kr)" stroke="#141414" stroke-width="1.0" stroke-linejoin="round" />
<polygon points="522.8,662.5 536.2,673.6 559.7,662.3 546.1,651.4" fill="#8a857c" stroke="#141414" stroke-width="1.0" stroke-linejoin="round" />
<polygon points="537.8,700.2 561.0,719.6 560.3,693.5 546.5,682.1" fill="url(#kf)" stroke="#141414" stroke-width="1.0" stroke-linejoin="round" />
<polygon points="561.0,719.6 600.2,700.2 584.0,681.9 560.3,693.5" fill="url(#kr)" stroke="#141414" stroke-width="1.0" stroke-linejoin="round" />
<polygon points="546.5,682.1 560.3,693.5 584.0,681.9 570.0,670.6" fill="#8a857c" stroke="#141414" stroke-width="1.0" stroke-linejoin="round" />
<polygon points="562.0,720.4 585.8,740.4 585.1,713.9 570.9,702.2" fill="url(#kf)" stroke="#141414" stroke-width="1.0" stroke-linejoin="round" />
<polygon points="585.8,740.4 625.3,720.4 609.0,702.0 585.1,713.9" fill="url(#kr)" stroke="#141414" stroke-width="1.0" stroke-linejoin="round" />
<polygon points="570.9,702.2 585.1,713.9 609.0,702.0 594.6,690.4" fill="#8a857c" stroke="#141414" stroke-width="1.0" stroke-linejoin="round" />
<polygon points="586.8,741.2 611.3,761.8 610.7,734.9 596.0,722.8" fill="url(#kf)" stroke="#141414" stroke-width="1.0" stroke-linejoin="round" />
<polygon points="611.3,761.8 651.1,741.3 634.7,722.7 610.7,734.9" fill="url(#kr)" stroke="#141414" stroke-width="1.0" stroke-linejoin="round" />
<polygon points="596.0,722.8 610.7,734.9 634.7,722.7 619.9,710.8" fill="#8a857c" stroke="#141414" stroke-width="1.0" stroke-linejoin="round" />
<polygon points="612.3,762.6 637.6,783.8 636.9,756.5 621.9,744.1" fill="url(#kf)" stroke="#141414" stroke-width="1.0" stroke-linejoin="round" />
<polygon points="637.6,783.8 677.6,762.8 661.1,744.0 636.9,756.5" fill="url(#kr)" stroke="#141414" stroke-width="1.0" stroke-linejoin="round" />
<polygon points="621.9,744.1 636.9,756.5 661.1,744.0 645.9,731.8" fill="#8a857c" stroke="#141414" stroke-width="1.0" stroke-linejoin="round" />
<polygon points="638.6,784.7 664.6,806.5 664.0,778.8 648.5,766.0" fill="url(#kf2)" stroke="#141414" stroke-width="1.0" stroke-linejoin="round" />
<polygon points="664.6,806.5 705.0,784.9 688.4,766.0 664.0,778.8" fill="url(#kr2)" stroke="#141414" stroke-width="1.0" stroke-linejoin="round" />
<polygon points="648.5,766.0 664.0,778.8 688.4,766.0 672.7,753.4" fill="#8a857c" stroke="#141414" stroke-width="1.0" stroke-linejoin="round" />
<polygon points="665.6,807.3 712.9,846.9 712.3,818.6 675.8,788.5" fill="url(#kf2)" stroke="#141414" stroke-width="1.0" stroke-linejoin="round" />
<polygon points="712.9,846.9 753.8,824.3 737.0,805.1 712.3,818.6" fill="url(#kr2)" stroke="#141414" stroke-width="1.0" stroke-linejoin="round" />
<polygon points="675.8,788.5 712.3,818.6 737.0,805.1 700.2,775.5" fill="#8a857c" stroke="#141414" stroke-width="1.0" stroke-linejoin="round" />
<polygon points="724.3,856.5 780.8,903.8 780.2,874.5 735.2,837.4" fill="url(#kf2)" stroke="#141414" stroke-width="1.0" stroke-linejoin="round" />
<polygon points="780.8,903.8 822.3,879.7 805.3,860.2 780.2,874.5" fill="url(#kr2)" stroke="#141414" stroke-width="1.0" stroke-linejoin="round" />
<polygon points="735.2,837.4 780.2,874.5 805.3,860.2 760.0,823.7" fill="#8a857c" stroke="#141414" stroke-width="1.0" stroke-linejoin="round" />
<polygon points="322.9,568.6 366.8,606.8 366.0,582.6 329.5,551.4" fill="url(#kf2)" stroke="#141414" stroke-width="1.0" stroke-linejoin="round" />
<polygon points="366.8,606.8 404.7,589.9 388.9,572.6 366.0,582.6" fill="url(#kr2)" stroke="#141414" stroke-width="1.0" stroke-linejoin="round" />
<polygon points="329.5,551.4 366.0,582.6 388.9,572.6 352.0,541.8" fill="#8a857c" stroke="#141414" stroke-width="1.0" stroke-linejoin="round" />
<polygon points="368.4,608.2 388.1,625.4 387.4,600.9 375.5,590.7" fill="url(#kf2)" stroke="#141414" stroke-width="1.0" stroke-linejoin="round" />
<polygon points="388.1,625.4 426.3,608.1 410.4,590.6 387.4,600.9" fill="url(#kr2)" stroke="#141414" stroke-width="1.0" stroke-linejoin="round" />
<polygon points="375.5,590.7 387.4,600.9 410.4,590.6 398.4,580.5" fill="#8a857c" stroke="#141414" stroke-width="1.0" stroke-linejoin="round" />
<polygon points="389.7,626.8 595.0,805.4 594.3,777.9 397.1,609.2" fill="url(#kf2)" stroke="#141414" stroke-width="1.0" stroke-linejoin="round" />
<polygon points="595.0,805.4 636.0,783.9 619.1,765.1 594.3,777.9" fill="url(#kr2)" stroke="#141414" stroke-width="1.0" stroke-linejoin="round" />
<polygon points="397.1,609.2 594.3,777.9 619.1,765.1 420.2,598.8" fill="#8a857c" stroke="#141414" stroke-width="1.0" stroke-linejoin="round" />
<polygon points="596.0,806.3 641.4,845.8 640.8,817.5 605.7,787.6" fill="url(#kf2)" stroke="#141414" stroke-width="1.0" stroke-linejoin="round" />
<polygon points="641.4,845.8 682.9,823.3 665.8,804.2 640.8,817.5" fill="url(#kr2)" stroke="#141414" stroke-width="1.0" stroke-linejoin="round" />
<polygon points="605.7,787.6 640.8,817.5 665.8,804.2 630.5,774.7" fill="#8a857c" stroke="#141414" stroke-width="1.0" stroke-linejoin="round" /><polygon points="932.6,287.2 1430.4,526.8 1568.8,461.6 1067.2,244.2" fill="#847f76" stroke="#141414" stroke-width="1.0" stroke-linejoin="round" />
<defs><linearGradient id="g2" gradientUnits="userSpaceOnUse" x1="1318.0" y1="352.9" x2="1320.9" y2="346.3"><stop offset="0.000" stop-color="#86827a"/><stop offset="0.450" stop-color="#9f9c95"/><stop offset="1.000" stop-color="#77746e"/></linearGradient></defs><polygon points="1067.2,244.2 1568.8,461.6 1582.5,458.9 1081.2,243.2" fill="url(#g2)" stroke="#141414" stroke-width="0.8" stroke-linejoin="round" />
<path d="M1212.6 691.5L1202.4 702.3L1195.6 714.1L1191.2 727.5L1189.2 739.6L1190.8 752.6L1196.2 760.7L1226.4 745.1L1564.9 569.5L1576.7 553.9L1588.0 531.4L1596.1 508.0L1598.2 489.9L1594.8 474.3L1587.1 463.0L1579.9 458.9L1571.2 460.5L1430.4 526.8Z" fill="#58544d" stroke="#141414" stroke-width="1.0" stroke-linejoin="round"/>
<polygon points="1212.6,691.5 1430.4,526.8 1564.9,463.5 1564.2,468.3 1429.8,532.0 1214.8,695.4" fill="#625e57" />
<polyline points="1214.8,695.4 1429.8,532.0 1564.2,468.3" fill="none" stroke="#141414" stroke-width="0.8"/>
<path d="M1200.0 730.0L1530.0 540.0" stroke="#141414" stroke-width="1.0"/>
<polygon points="733.6,407.2 1212.6,691.5 1430.4,526.8 932.7,287.3" fill="#888279" stroke="#141414" stroke-width="1.0" stroke-linejoin="round" />
<defs><linearGradient id="g3" gradientUnits="userSpaceOnUse" x1="986.6" y1="533.1" x2="999.2" y2="511.5"><stop offset="0.000" stop-color="#b4b2ac"/><stop offset="0.080" stop-color="#8f8b83"/><stop offset="0.350" stop-color="#a9a397"/><stop offset="0.600" stop-color="#8b877f"/><stop offset="0.800" stop-color="#7b7a76"/><stop offset="1.000" stop-color="#8c8c89"/></linearGradient></defs><polygon points="774.4,409.5 1198.8,656.6 1222.7,638.9 796.3,396.1" fill="url(#g3)" stroke="#141414" stroke-width="0.9" stroke-linejoin="round" />
<path d="M774.4 409.5L796.3 396.1Q806.3 409.8 788.4 411.5Z" fill="#55534f" stroke="#141414" stroke-width="0.8"/>
<polygon points="800.1,393.8 1225.6,635.1 1348.1,544.0 913.2,324.9" fill="#827d75" stroke="#141414" stroke-width="1.0" stroke-linejoin="round" />
<polygon points="800.1,393.8 977.0,494.1 1094.7,416.3 913.2,324.9" fill="#47443f" stroke="#141414" stroke-width="0.8" stroke-linejoin="round" />
<defs><linearGradient id="g4" gradientUnits="userSpaceOnUse" x1="1139.0" y1="429.8" x2="1147.9" y2="411.8"><stop offset="0.000" stop-color="#b4b2ac"/><stop offset="0.080" stop-color="#8f8b83"/><stop offset="0.350" stop-color="#a9a397"/><stop offset="0.600" stop-color="#8b877f"/><stop offset="0.800" stop-color="#7b7a76"/><stop offset="1.000" stop-color="#8c8c89"/></linearGradient></defs><polygon points="919.6,320.1 1358.3,539.4 1378.1,524.7 937.9,308.9" fill="url(#g4)" stroke="#141414" stroke-width="0.9" stroke-linejoin="round" />
<polygon points="1309.7,515.1 1358.3,539.4 1378.1,524.7 1329.4,500.9" fill="#2e2c29" stroke="#141414" stroke-width="0.9" stroke-linejoin="round" />
<path d="M920.0 320.0L938.8 308.8L973.8 333.8L960.0 341.2Z" fill="#2f2d2a" stroke="#141414" stroke-width="1.0" stroke-linejoin="round"/>
<defs><linearGradient id="g5" gradientUnits="userSpaceOnUse" x1="840.7" y1="470.8" x2="817.7" y2="509.5"><stop offset="0.000" stop-color="#8e8a80"/><stop offset="0.100" stop-color="#8c887e"/><stop offset="0.280" stop-color="#a39d92"/><stop offset="0.450" stop-color="#8b877f"/><stop offset="0.600" stop-color="#6f6e6a"/><stop offset="0.800" stop-color="#9b9c98"/><stop offset="1.000" stop-color="#8a8985"/></linearGradient></defs><polygon points="733.6,407.2 947.8,534.3 938.2,543.6 932.3,554.2 928.8,566.4 927.7,577.5 716.1,446.4 716.6,436.1 719.4,424.9 724.7,415.4" fill="url(#g5)" />
<polygon points="716.1,446.4 719.1,458.0 725.5,465.7 936.2,597.8 930.2,589.8 927.7,577.5" fill="#69665f" stroke="#69665f" stroke-width="0.6" stroke-linejoin="round" />
<path d="M716.1 446.4L927.7 577.5" stroke="#141414" stroke-width="1.0"/>
<path d="M725.5 465.7L936.2 597.8" stroke="#141414" stroke-width="1.0"/>
<defs><linearGradient id="g6" gradientUnits="userSpaceOnUse" x1="1187.4" y1="676.5" x2="1160.4" y2="721.9"><stop offset="0.000" stop-color="#8e8a80"/><stop offset="0.100" stop-color="#8c887e"/><stop offset="0.280" stop-color="#a39d92"/><stop offset="0.450" stop-color="#8b877f"/><stop offset="0.600" stop-color="#6f6e6a"/><stop offset="0.800" stop-color="#9b9c98"/><stop offset="1.000" stop-color="#8a8985"/></linearGradient></defs><polygon points="1162.1,661.5 1212.6,691.5 1202.4,702.3 1195.6,714.1 1191.2,727.5 1189.2,739.6 1139.3,708.7 1141.1,696.7 1145.3,683.5 1151.9,672.0" fill="url(#g6)" />
<polygon points="1139.3,708.7 1141.1,721.5 1146.6,729.7 1196.2,760.7 1190.8,752.6 1189.2,739.6" fill="#69665f" stroke="#69665f" stroke-width="0.6" stroke-linejoin="round" />
<path d="M1139.3 708.7L1189.2 739.6" stroke="#141414" stroke-width="1.0"/>
<path d="M1146.6 729.7L1196.2 760.7" stroke="#141414" stroke-width="1.0"/>
<polyline points="733.6,407.2 724.7,415.4 719.4,424.9 716.6,436.1 716.1,446.4 719.1,458.0 725.5,465.7" fill="none" stroke="#141414" stroke-width="1"/>
<path d="M733.6 407.2L947.8 534.3" stroke="#141414" stroke-width="1.0"/>
<path d="M1162.1 661.5L1212.6 691.5" stroke="#141414" stroke-width="1.0"/>
<polygon points="947.8,534.3 1162.1,661.5 1154.0,724.6 943.3,593.5" fill="#77746d" stroke="#141414" stroke-width="1.0" stroke-linejoin="round" />
<polygon points="947.9,543.3 1152.2,665.3 1149.5,717.6 948.2,592.6" fill="#74726c" stroke="#141414" stroke-width="0.9" stroke-linejoin="round" />
<path d="M948.0 560.7L1151.2 683.9" stroke="#141414" stroke-width="0.8"/>
<polygon points="951.0,585.2 1080.8,665.1 1080.5,673.4 951.1,593.1" fill="#5a5752" stroke="#141414" stroke-width="0.7" stroke-linejoin="round" />
<polygon points="976.9,566.0 1005.6,583.3 1005.4,607.8 976.8,590.3" fill="#77746e" stroke="#141414" stroke-width="1.1" stroke-linejoin="round" />
<polygon points="981.5,572.8 1000.9,584.6 1000.8,600.9 981.4,589.1" fill="#4f4c48" stroke="#141414" stroke-width="0.8" stroke-linejoin="round" />
<polygon points="985.0,583.1 997.2,590.6 1000.8,600.9 981.4,589.1" fill="#7d7972" />
<polygon points="1028.7,597.1 1059.9,615.8 1059.3,640.7 1028.3,621.8" fill="#77746e" stroke="#141414" stroke-width="1.1" stroke-linejoin="round" />
<polygon points="1033.4,604.1 1054.9,617.1 1054.5,633.6 1033.1,620.6" fill="#4f4c48" stroke="#141414" stroke-width="0.8" stroke-linejoin="round" />
<polygon points="1037.0,614.6 1050.9,623.1 1054.5,633.6 1033.1,620.6" fill="#7d7972" />
<polygon points="1098.9,636.3 1149.7,666.8 1129.5,684.4 1074.2,650.5" fill="#6d6862" stroke="#141414" stroke-width="0.9" stroke-linejoin="round" />
<polygon points="1074.2,650.5 1129.5,684.4 1128.2,712.9 1073.3,678.6" fill="#7a7873" stroke="#141414" stroke-width="0.9" stroke-linejoin="round" />
<polygon points="1110.8,672.9 1129.5,684.4 1128.2,712.9 1109.6,701.3" fill="url(#swend)" stroke="#141414" stroke-width="0.9" stroke-linejoin="round" />
<circle cx="1089.5" cy="677.2" r="2" fill="none" stroke="#222" stroke-width="0.8"/>
<polygon points="947.8,534.3 938.2,543.6 932.3,554.2 928.8,566.4 927.7,577.5 947.9,569.1" fill="#4d4a45" stroke="#141414" stroke-width="1.0" stroke-linejoin="round" />
<polygon points="927.7,577.5 930.2,589.8 936.2,597.8 948.0,592.8 947.9,569.1" fill="#57544e" stroke="#141414" stroke-width="1.0" stroke-linejoin="round" />
<polygon points="953.2,290.8 1143.2,381.7 1192.9,337.0 1014.8,256.9" fill="#8d887f" stroke="#141414" stroke-width="1.0" stroke-linejoin="round" />
<polygon points="1014.8,256.9 1192.9,337.0 1254.3,314.1 1075.3,237.3" fill="#7f7a71" stroke="#141414" stroke-width="1.0" stroke-linejoin="round" />
<defs><linearGradient id="g7" gradientUnits="userSpaceOnUse" x1="1164.8" y1="275.7" x2="1168.4" y2="267.3"><stop offset="0.000" stop-color="#807b72"/><stop offset="0.500" stop-color="#9a978f"/><stop offset="1.000" stop-color="#74716b"/></linearGradient></defs><polygon points="1075.3,237.3 1254.3,314.1 1269.6,310.3 1090.4,234.2" fill="url(#g7)" stroke="#141414" stroke-width="0.8" stroke-linejoin="round" />
<path d="M1140.0 384.9L1184.9 348.7L1268.6 316.2L1286.0 315.0L1302.3 326.2L1308.5 339.3L1274.8 333.7Z" fill="#4d4943" stroke="#141414" stroke-width="1.0" stroke-linejoin="round"/>
<path d="M1189.9 336.2L1266.0 310.0L1268.6 316.2L1184.9 348.7Z" fill="#736f68" stroke="#141414" stroke-width="0.8" stroke-linejoin="round"/>
<path d="M1266.0 310.0L1280.0 309.0L1295.0 314.0L1306.0 327.0L1309.0 339.0L1302.3 326.2L1286.0 315.0L1268.6 316.2Z" fill="#66625b" stroke="#141414" stroke-width="0.8" stroke-linejoin="round"/>
<path d="M966.2 293.8L991.2 277.5L1043.8 302.5L1017.5 320.0Z" fill="#807c74" stroke="#141414" stroke-width="1.0" stroke-linejoin="round"/>
<path d="M991.2 277.5L1043.8 302.5L1042.2 312.5L992.8 289.5Z" fill="url(#slotwall)"/>
<path d="M966.2 293.8L991.2 277.5L992.8 289.5Z" fill="#4e4c48"/>
<path d="M996.8 291.5L1038.2 314.5" stroke="#2a2826" stroke-width="2.6"/>
<path d="M996.8 291.5L1038.2 314.5" stroke="#55524d" stroke-width="0.8" stroke-dasharray="3 3"/>
<path d="M966.2 293.8L991.2 277.5L1043.8 302.5L1017.5 320.0Z" fill="none" stroke="#141414" stroke-width="1.0" stroke-linejoin="round"/>
<path d="M991.2 277.5L992.8 289.5L1042.2 312.5" fill="none" stroke="#141414" stroke-width="0.8"/>
<path d="M1023.8 322.5L1033.8 303.8L1103.8 330.0L1082.5 348.8Z" fill="#807c74" stroke="#141414" stroke-width="1.0" stroke-linejoin="round"/>
<path d="M1033.8 303.8L1103.8 330.0L1102.2 340.0L1035.2 315.8Z" fill="url(#slotwall)"/>
<path d="M1023.8 322.5L1033.8 303.8L1035.2 315.8Z" fill="#4e4c48"/>
<path d="M1039.2 317.8L1098.2 342.0" stroke="#2a2826" stroke-width="2.6"/>
<path d="M1039.2 317.8L1098.2 342.0" stroke="#55524d" stroke-width="0.8" stroke-dasharray="3 3"/>
<path d="M1023.8 322.5L1033.8 303.8L1103.8 330.0L1082.5 348.8Z" fill="none" stroke="#141414" stroke-width="1.0" stroke-linejoin="round"/>
<path d="M1033.8 303.8L1035.2 315.8L1102.2 340.0" fill="none" stroke="#141414" stroke-width="0.8"/>
<path d="M1083.8 348.8L1100.0 331.2L1166.2 357.5L1147.5 377.5Z" fill="#807c74" stroke="#141414" stroke-width="1.0" stroke-linejoin="round"/>
<path d="M1100.0 331.2L1166.2 357.5L1164.8 367.5L1101.5 343.2Z" fill="url(#slotwall)"/>
<path d="M1083.8 348.8L1100.0 331.2L1101.5 343.2Z" fill="#4e4c48"/>
<path d="M1105.5 345.2L1160.8 369.5" stroke="#2a2826" stroke-width="2.6"/>
<path d="M1105.5 345.2L1160.8 369.5" stroke="#55524d" stroke-width="0.8" stroke-dasharray="3 3"/>
<path d="M1083.8 348.8L1100.0 331.2L1166.2 357.5L1147.5 377.5Z" fill="none" stroke="#141414" stroke-width="1.0" stroke-linejoin="round"/>
<path d="M1100.0 331.2L1101.5 343.2L1164.8 367.5" fill="none" stroke="#141414" stroke-width="0.8"/>
<polygon points="1162.5,390.9 1399.7,504.4 1499.0,458.4 1261.0,352.9" fill="#827d74" stroke="#141414" stroke-width="1.0" stroke-linejoin="round" />
<polygon points="1172.8,392.2 1397.7,499.5 1486.9,458.4 1261.2,357.9" fill="none" stroke="#141414" stroke-width="0.8" stroke-linejoin="round" />
<polygon points="1234.7,377.8 1270.6,394.3 1300.7,382.2 1264.7,366.1" fill="#7d786f" stroke="#141414" stroke-width="1.0" stroke-linejoin="round" />
<polygon points="1186.3,395.9 1223.1,413.4 1252.2,401.7 1215.3,384.5" fill="#7d786f" stroke="#141414" stroke-width="1.0" stroke-linejoin="round" />
<polygon points="1277.8,394.2 1446.6,471.3 1468.8,461.2 1299.9,385.2" fill="#7d786f" stroke="#141414" stroke-width="1.0" stroke-linejoin="round" />
<polygon points="1228.4,414.1 1390.8,491.2 1413.8,480.7 1251.3,404.9" fill="#7d786f" stroke="#141414" stroke-width="1.0" stroke-linejoin="round" />
<ellipse cx="1563" cy="521" rx="29" ry="47" transform="rotate(27 1563 521)" fill="#5c5851" stroke="#141414" stroke-width="1.1"/>
<path d="M1545 560C1530 545 1528 515 1540 495C1548 482 1556 476 1566 474" fill="none" stroke="#a9a59c" stroke-width="1"/>
<ellipse cx="1564" cy="520.5" rx="26.5" ry="44" transform="rotate(27 1564 520.5)" fill="none" stroke="#141414" stroke-width="0.7"/>

<g>
 <ellipse cx="1858" cy="236" rx="30" ry="8" fill="#000" opacity="0.06"/>
 <path d="M1822 180L1857 168L1890 182L1857 197Z" fill="#f4f4f4"/>
 <path d="M1822 180L1857 197L1857 242L1825 220Z" fill="#ececec"/>
 <path d="M1857 197L1890 182L1887 219L1857 242Z" fill="#e4e4e4"/>
 <path d="M1822 180L1857 168L1890 182M1822 180L1857 197L1890 182M1857 197V242M1822 180L1825 220L1857 242L1887 219L1890 182" fill="none" stroke="#8a8a8a" stroke-width="0.8" stroke-dasharray="2.5 1.5"/>
 <path d="M1858 152V168" stroke="#6adf6a" stroke-width="1.5"/>
 <text x="1854" y="161" font-family="Liberation Sans" font-size="10" fill="#6adf6a">Y</text>
 <path d="M1825 220L1819 223" stroke="#6a6aef" stroke-width="1.5"/>
 <text x="1807" y="231" font-family="Liberation Sans" font-size="11" fill="#6a6aef">Z</text>
 <path d="M1887 219L1893 223" stroke="#ef7a7a" stroke-width="1.5"/>
 <text x="1893" y="235" font-family="Liberation Sans" font-size="11" fill="#ef7a7a">X</text>
 <text x="1827" y="216" font-family="Liberation Sans" font-size="16" fill="#8a9098" transform="rotate(8 1836 210)">前</text>
 <text x="1861" y="218" font-family="Liberation Sans" font-size="16" fill="#8a9098" transform="rotate(-20 1870 210)">右</text>
 <text x="1846" y="190" font-family="Liberation Sans" font-size="12" fill="#8a9098" transform="rotate(-25 1855 185)">上</text>
 <path d="M1775 138.7L1921 182.5" stroke="#4a4a4a" stroke-width="1"/>
</g>
</g>

<rect x="841" y="1005" width="237" height="24" fill="#f0f0f0"/>
<g stroke="#333" fill="none" stroke-width="1">
 <path d="M852.5 1026V1010M850 1013L852.5 1009L855 1013"/>
 <path d="M847 1018C847 1015 858 1015 859 1018C859 1021 851 1022 848 1020M850 1018L847 1020.5L850 1022"/>
</g>
<path d="M866 1015H871L868.5 1018Z" fill="#333"/>
<rect x="878.5" y="1013.5" width="12" height="10" fill="none" stroke="#333"/><rect x="881" y="1016" width="7" height="4" fill="#888"/><path d="M880 1013L883 1010L886 1012L889 1010V1013" fill="#555"/>
<path d="M906 1025C903.5 1022 902 1019.5 902 1017L903 1015.5L905.5 1017.5V1010.5C905.5 1009 907.5 1009 907.5 1010.5V1015V1008.5C907.5 1007 909.5 1007 909.5 1008.5V1015V1009C909.5 1007.5 911.5 1007.5 911.5 1009V1015.5V1010.5C911.5 1009 913.5 1009 913.5 1010.5V1019C913.5 1022 912 1024 911 1025Z" fill="#f4f4f4" stroke="#333" stroke-width="0.9" stroke-linejoin="round"/>
<circle cx="934" cy="1017" r="4.5" fill="#dfeaf0" stroke="#333" stroke-width="1"/><path d="M937 1020L941 1024" stroke="#333" stroke-width="2"/><path d="M939 1012H945M942 1009V1015" stroke="#333" stroke-width="0.8"/>
<rect x="955" y="1009" width="15" height="16" fill="none" stroke="#333" stroke-width="0.8" stroke-dasharray="1.5 1"/><circle cx="961" cy="1016" r="5" fill="#dfeaf0" stroke="#333" stroke-width="1"/><path d="M964.5 1019.5L969 1024" stroke="#333" stroke-width="2"/>
<path d="M975 1015H980L977.5 1018Z" fill="#333"/>
<rect x="988.5" y="1009.5" width="15" height="12" fill="#a9c4e6" stroke="#333"/><path d="M993 1024H999M996 1021.5V1024" stroke="#333"/>
<path d="M1006 1015H1011L1008.5 1018Z" fill="#333"/>
<rect x="1019.5" y="1009.5" width="15" height="15" fill="#eee" stroke="#555"/><path d="M1023 1010V1024M1026.5 1010V1024M1030 1010V1024M1020 1013H1034M1020 1016.5H1034M1020 1020H1034" stroke="#666" stroke-width="1.2"/>
<path d="M1037 1015H1042L1039.5 1018Z" fill="#333"/>
<rect x="1049.5" y="1009.5" width="15" height="15" fill="#3d5fa8" stroke="#333" stroke-width="0.6"/><rect x="1051.5" y="1011.5" width="4.5" height="4.5" fill="#a9c4e6"/><rect x="1058" y="1011.5" width="4.5" height="4.5" fill="#a9c4e6"/><rect x="1051.5" y="1018" width="4.5" height="4.5" fill="#a9c4e6"/><rect x="1058" y="1018" width="4.5" height="4.5" fill="#a9c4e6"/>
<path d="M1068 1015H1073L1070.5 1018Z" fill="#333"/>

</svg>

<div style="position:absolute;left:0;top:0;width:1921px;height:22px;background:#fff"></div>
<svg style="position:absolute;left:1px;top:1px" width="17" height="19" viewBox="0 0 17 19">
 <defs><linearGradient id="fi" x1="0" y1="0" x2="0" y2="1"><stop offset="0" stop-color="#ff9a3c"/><stop offset="1" stop-color="#e8601c"/></linearGradient></defs>
 <path d="M3 1H13.5L15 2.5V13H2V2Z" fill="url(#fi)"/>
 <rect x="2" y="12" width="13" height="5.5" rx="0.8" fill="#a8461a"/>
 <text x="5.2" y="10.5" font-family="Liberation Sans" font-weight="bold" font-size="9.5" fill="#fff">F</text>
 <text x="5" y="16.6" font-family="Liberation Sans" font-weight="bold" font-size="3.6" fill="#f7c9a8">360</text>
</svg>

<svg style="position:absolute;left:1795px;top:0" width="126" height="22">
 <path d="M3 9.5H14" stroke="#000" stroke-width="1"/>
 <rect x="49.5" y="6.5" width="8" height="8" fill="none" stroke="#000"/>
 <path d="M51.5 6.5V4.5H59.5V12.5H57.5" fill="none" stroke="#000"/>
 <path d="M94 4L104 14M104 4L94 14" stroke="#000" stroke-width="1.1"/>
</svg>

<div style="position:absolute;left:0;top:22px;width:1917px;height:32px;background:#cccccc"></div>
<svg style="position:absolute;left:0;top:22px" width="192" height="32">
 <g fill="#6b6b6b">
  <rect x="8" y="9" width="4" height="4"/><rect x="13" y="9" width="4" height="4"/><rect x="18" y="9" width="4" height="4"/>
  <rect x="8" y="14" width="4" height="4"/><rect x="13" y="14" width="4" height="4"/><rect x="18" y="14" width="4" height="4"/>
  <rect x="8" y="19" width="4" height="4"/><rect x="13" y="19" width="4" height="4"/><rect x="18" y="19" width="4" height="4"/>
  <path d="M41 8H50L54 12V24H41Z"/>
  <path d="M60 14H67L63.5 18Z"/>
  <path d="M86 9H98L100 11V23H88L86 21Z M89.5 10.5V14.5H96.5V10.5Z M89.5 17.5V21.5H91.5V18.5H94.5V21.5H96.5V17.5Z" fill-rule="evenodd"/>
  <path d="M139 14H146L142.5 18Z"/>
  <path d="M178 14H185L181.5 18Z" fill="#8a8a8a"/>
 </g>
 <path d="M131 22C131 16 127 14 121 14M124 10.5L120 14L124 17.5" fill="none" stroke="#6b6b6b" stroke-width="2"/>
 <path d="M160 22C160 16 164 14 170 14M167 10.5L171 14L167 17.5" fill="none" stroke="#8f8f8f" stroke-width="2"/>
</svg>
<div style="position:absolute;left:192px;top:26px;width:484px;height:28px;background:#bcbcbc;border-radius:3px 3px 0 0"></div>
<div style="position:absolute;left:680px;top:26px;width:484px;height:28px;background:#f2f2f2;border-radius:3px 3px 0 0"></div>
<div style="position:absolute;left:1168px;top:26px;width:484px;height:28px;background:#bcbcbc;border-radius:3px 3px 0 0"></div>
<div style="position:absolute;left:1656px;top:26px;width:28px;height:28px;background:#bcbcbc;border-radius:3px 3px 0 0"></div>
<svg style="position:absolute;left:406px;top:31px" width="14" height="16"><path d="M3.5 7V5A3.5 3.5 0 0 1 10.5 5V7" fill="none" stroke="#6e6e6e" stroke-width="1.6"/><rect x="2" y="7" width="10" height="8" rx="1" fill="#6e6e6e"/><path d="M4 10H10M4 12.5H10" stroke="#bcbcbc" stroke-width="0.9"/></svg>
<svg style="position:absolute;left:836px;top:33px" width="15" height="15"><path d="M7 1L13 4V11L7 14L1 11V4Z" fill="#f58a2a"/><path d="M7 1L13 4L7 7L1 4Z" fill="#fbb063"/><path d="M7 7L13 4V11L7 14Z" fill="#d8661a"/></svg>
<svg style="position:absolute;left:1328px;top:33px" width="15" height="15"><path d="M7 1L13 4V11L7 14L1 11V4Z" fill="#f58a2a"/><path d="M7 1L13 4L7 7L1 4Z" fill="#fbb063"/><path d="M7 7L13 4V11L7 14Z" fill="#d8661a"/></svg>
<svg style="position:absolute;left:659px;top:34px" width="12" height="12"><path d="M2 2L10 10M10 2L2 10" stroke="#707070" stroke-width="1.3"/></svg>
<svg style="position:absolute;left:1147px;top:34px" width="12" height="12"><path d="M2 2L10 10M10 2L2 10" stroke="#606060" stroke-width="1.3"/></svg>
<svg style="position:absolute;left:1634px;top:34px" width="12" height="12"><path d="M2 2L10 10M10 2L2 10" stroke="#707070" stroke-width="1.3"/></svg>
<svg style="position:absolute;left:1660px;top:30px" width="20" height="20"><path d="M3 10H17M10 3V17" stroke="#707070" stroke-width="2.2"/></svg>
<svg style="position:absolute;left:1690px;top:22px" width="227" height="32">
 <path d="M6 7H15L18 10V13L11 22V25H6Z" fill="#676767"/>
 <path d="M12 25L20 15L22 17L14 26Z" fill="#676767"/>
 <circle cx="79" cy="16" r="8" fill="none" stroke="#676767" stroke-width="1"/>
 <circle cx="79" cy="16" r="6.5" fill="#676767"/>
 <path d="M78.5 11.5V16.5H83" fill="none" stroke="#ccc" stroke-width="1.3"/>
 <path d="M128 8.5C124 8.5 123 12 123 15V19L121 21H135L133 19V15C133 12 132 8.5 128 8.5ZM126 22H130L128 24Z" fill="#676767"/>
 <circle cx="132" cy="10" r="2.8" fill="#0696d7"/>
 <circle cx="161" cy="16" r="8" fill="#676767"/>
 <path d="M158 13.5C158 11 164 11 164 13.5C164 15.5 161 15.5 161 18" fill="none" stroke="#ccc" stroke-width="2"/>
 <circle cx="161" cy="20.5" r="1.2" fill="#ccc"/>
 <defs><linearGradient id="av" x1="0" y1="0" x2="0" y2="1"><stop offset="0" stop-color="#8a9ab0"/><stop offset="1" stop-color="#b6c4d6"/></linearGradient></defs>
 <circle cx="202" cy="16" r="12" fill="url(#av)"/>
 <path d="M202 5C198 5 196.5 8 196.5 11C196.5 14 198 17 199 18C195 19 192 21 191 24A12 12 0 0 0 213 24C212 21 209 19 205 18C206 17 207.5 14 207.5 11C207.5 8 206 5 202 5Z" fill="#56647a"/>
</svg>
<div style="position:absolute;left:0;top:54px;width:1917px;height:84px;background:#f2f2f2"></div>
<div style="position:absolute;left:0;top:135px;width:1917px;height:1px;background:#dcdcdc"></div>
<div style="position:absolute;left:11px;top:64px;width:107px;height:59px;border:1px solid #d6d6d6;border-radius:4px;background:#f2f2f2"></div>
<svg style="position:absolute;left:81px;top:92px" width="8" height="6"><path d="M0 1H7L3.5 5Z" fill="#222"/></svg>
<div style="position:absolute;left:137px;top:74px;width:57px;height:3px;background:#0696d7;border-radius:1px"></div>
<div style="position:absolute;left:350px;top:81px;width:1px;height:50px;background:#d8d8d8"></div>
<div style="position:absolute;left:619px;top:81px;width:1px;height:50px;background:#d8d8d8"></div>
<div style="position:absolute;left:716px;top:81px;width:1px;height:50px;background:#d8d8d8"></div>
<div style="position:absolute;left:775px;top:81px;width:1px;height:50px;background:#d8d8d8"></div>
<div style="position:absolute;left:834px;top:81px;width:1px;height:50px;background:#d8d8d8"></div>
<div style="position:absolute;left:893px;top:81px;width:1px;height:50px;background:#d8d8d8"></div>

<svg style="position:absolute;left:0;top:54px" width="960" height="80">
 <!-- sketch -->
 <g>
  <path d="M137.5 27.5H165.5V52.5M137.5 27.5V52.5H155" fill="none" stroke="#555" stroke-width="1"/>
  <rect x="136" y="26" width="3" height="3" fill="#555"/><rect x="164" y="26" width="3" height="3" fill="#555"/><rect x="136" y="52" width="3" height="3" fill="#555"/>
  <path d="M144 34.5H156M144.5 34V47" fill="none" stroke="#555" stroke-dasharray="2 1.5"/>
  <path d="M146.5 46.5C152 45 156 40 156.5 34.5" fill="none" stroke="#555"/>
  <rect x="143" y="33" width="3" height="3" fill="#555"/><rect x="155" y="33" width="3" height="3" fill="#555"/><rect x="143" y="45" width="3" height="3" fill="#555"/>
  <path d="M155 50H167M161 44V57" stroke="#1aa04a" stroke-width="3.2"/>
 </g>
 <!-- extrude -->
 <path d="M180 31L184 27H203L203 49L199 53H180Z" fill="#67aee6"/>
 <path d="M199 31H180L184 27H203Z" fill="#8cc8f5"/>
 <path d="M199 31L203 27V49L199 53Z" fill="#3f8fd0"/>
 <path d="M180 53H199L203 49V53L199 57H180Z" fill="#d6d6d6"/>
 <path d="M207.5 54V28M205 31L207.5 26L210 31" fill="none" stroke="#222" stroke-width="1.2"/>
 <!-- revolve -->
 <path d="M223 40C232 33 243 33 252 40L252 48C243 42 232 42 223 48Z" fill="#67aee6"/>
 <path d="M223 40C232 33 243 33 252 40L248 44C240 39 234 39 227 44Z" fill="#8cc8f5"/>
 <path d="M223 40V48L227 52V44Z" fill="#3f8fd0"/>
 <path d="M248 44L253 40V48L248 52Z" fill="#fff" stroke="#333" stroke-width="0.8"/>
 <path d="M225 35C234 27 244 27 252 33" fill="none" stroke="#333" stroke-width="1"/>
 <path d="M223 36L228 32L228 37Z" fill="#333"/>
 <!-- hole -->
 <path d="M266 31L270 27H297V51L293 56H266Z" fill="#d6d6d6" stroke="#555" stroke-width="0.8"/>
 <path d="M293 31V56L297 51V27Z" fill="#b8b8b8"/>
 <circle cx="278.5" cy="42.5" r="7.5" fill="#eee" stroke="#444" stroke-width="0.9"/>
 <circle cx="278.5" cy="42.5" r="5" fill="#67aee6"/>
 <path d="M280 37.5A5 5 0 0 1 283 46A6 6 0 0 0 280 37.5Z" fill="#eee"/>
 <!-- pattern -->
 <rect x="308.5" y="27.5" width="4" height="4" fill="#fff" stroke="#555"/>
 <rect x="328" y="27" width="5" height="5" fill="#67aee6"/>
 <rect x="308" y="48" width="5" height="5" fill="#67aee6"/>
 <rect x="328" y="48" width="5" height="5" fill="#67aee6"/>
 <path d="M313 29.5H328M310.5 32V48M313 50.5H328" stroke="#555" stroke-width="1"/>
 <!-- press pull -->
 <path d="M363 33L367 27H372V57H363Z" fill="#d6d6d6" stroke="#444" stroke-width="0.8"/>
 <path d="M370 33L374 27H384V51L380 57H370Z" fill="#67aee6"/>
 <path d="M380 33L384 27V51L380 57Z" fill="#3f8fd0"/>
 <path d="M383 42.5H391M388 40L391 42.5L388 45" fill="none" stroke="#222" stroke-width="1.2"/>
 <!-- fillet -->
 <path d="M406 34L413 27H419C430 27 437 36 437 45V51L430 57H406Z" fill="#d6d6d6" stroke="#444" stroke-width="0.8"/>
 <path d="M419 27C430 27 437 36 437 42L430 46C430 39 425 34 419 33Z" fill="#67aee6"/>
 <path d="M430 46L437 42V51L430 57Z" fill="#b8b8b8"/>
 <!-- shell -->
 <path d="M448 34L454 27H480V51L474 57H448Z" fill="#d6d6d6" stroke="#444" stroke-width="0.8"/>
 <path d="M474 34L480 27V51L474 57Z" fill="#b8b8b8"/>
 <rect x="452" y="37" width="18" height="16" fill="#e8e8e8"/>
 <path d="M452 37H457V48H468V53H452Z" fill="#3f8fd0"/>
 <path d="M457 48H468V53H457Z" fill="#8cc8f5"/>
 <!-- combine -->
 <path d="M491 39L495 35H501V31L505 27H523V45L518 50H512V57H491Z" fill="#67aee6"/>
 <path d="M518 31L523 27V45L518 50Z" fill="#3f8fd0"/>
 <path d="M508 50L512 46V57L508 57Z" fill="#3f8fd0"/>
 <!-- split -->
 <path d="M535 31L539 27H565V41L561 45H535Z" fill="#67aee6"/>
 <path d="M561 31L565 27V41L561 45Z" fill="#3f8fd0"/>
 <path d="M535 50L539 47H565V53L561 57H535Z" fill="#d6d6d6" stroke="#555" stroke-width="0.6"/>
 <path d="M534 47H562L566 43" fill="none" stroke="#2b8fe0" stroke-width="1.3"/>
 <!-- move -->
 <path d="M593 29V55M580 42H606" stroke="#222" stroke-width="2"/>
 <path d="M593 26L588 32H598ZM593 58L588 52H598ZM577 42L583 37V47ZM609 42L603 37V47Z" fill="#222"/>
 <!-- new component -->
 <path d="M632 44H646V58H632ZM646 44H660V58H646Z" fill="#d6d6d6" stroke="#444" stroke-width="0.7"/>
 <path d="M646 44L649 40H662V54L660 58" fill="#d6d6d6" stroke="#444" stroke-width="0.7"/>
 <path d="M631 33L634 30H646V42L643 45H631Z" fill="#67aee6"/>
 <path d="M643 33L646 30V42L643 45Z" fill="#3f8fd0"/>
 <path d="M654 26L655.5 31L660 28L657.5 33L662 34.5L657.5 36L660 40L655.5 38L654 43L652.5 38L648 40L650.5 36L646 34.5L650.5 33L648 28L652.5 31Z" fill="#f5a623"/>
 <!-- joint -->
 <path d="M677 35C677 31 678 28 682 28C686 28 688 31 688 35V51L680 56L677 54Z" fill="#ddd" stroke="#555" stroke-width="0.8"/>
 <path d="M690 40L694 36L703 44V55L701 56L692 50V45Z" fill="#ddd" stroke="#555" stroke-width="0.8"/>
 <path d="M685 40V46M695 35V42" stroke="#2b8fe0" stroke-width="0.9"/>
 <!-- construct -->
 <path d="M732 34L737 29V57L732 57Z" fill="#d6d6d6" stroke="#555" stroke-width="0.7"/>
 <path d="M737 29V57L740 56L740 29" fill="#ccc"/>
 <path d="M741 33L749 27V51L741 57Z" fill="#5cbd6a"/>
 <path d="M753 35L761 29V51L753 57Z" fill="#e0956a"/>
 <path d="M732 34L737 29H746" fill="none" stroke="#555" stroke-width="0.7"/>
 <!-- inspect -->
 <path d="M792 38.5H818M792 35V42M818 35V42" stroke="#333" stroke-width="0.9"/>
 <path d="M794 38.5L797 36.5V40.5ZM816 38.5L813 36.5V40.5Z" fill="#333"/>
 <rect x="791" y="44" width="28" height="6" fill="#f5a100"/>
 <path d="M794 44V46M797 44V46M800 44V46M803 44V46M806 44V46M809 44V46M812 44V46M815 44V46" stroke="#8a5a00" stroke-width="0.6"/>
 <!-- insert -->
 <rect x="849" y="28" width="29" height="29" fill="#7fc1f2"/>
 <path d="M849 47C853 40 857 38 861 43C864 47 867 48 870 45C873 43 876 45 878 48V57H849Z" fill="#3a86c8"/>
 <circle cx="870" cy="34" r="3" fill="#fff6bf"/>
 <!-- select -->
 <rect x="904" y="24" width="38" height="38" fill="#0696d7"/>
 <rect x="907.5" y="27.5" width="30" height="23" fill="none" stroke="#8fe08a" stroke-width="1" stroke-dasharray="3 2"/>
 <path d="M928 39L928 56L932 52L935 59L938 58L935 51L940 51Z" fill="#fff"/>
</svg>
<div style="position:absolute;left:3px;top:143px;width:298px;height:24px;background:#f2f2f2;border:1px solid #cccccc;box-sizing:border-box;width:300px;height:25px"></div>
<svg style="position:absolute;left:6px;top:150px" width="16" height="12"><path d="M4 5.5L9 2V9ZM9 5.5L14 2V9Z" fill="#333"/></svg>
<svg style="position:absolute;left:280px;top:149px" width="14" height="14"><circle cx="6.5" cy="6.5" r="4.6" fill="#222"/><rect x="3.5" y="6" width="6" height="1.2" fill="#fff"/></svg>
<div style="position:absolute;left:7px;top:173px;width:5px;height:811px;background:#c8c8c8;border-radius:2px"></div>
<div style="position:absolute;left:7px;top:173px;width:5px;height:85px;background:#9a9a9a;border-radius:2px"></div>
<svg style="position:absolute;left:0;top:0" width="320" height="1041"><defs><linearGradient id="bodyg" x1="0" y1="0" x2="1" y2="0"><stop offset="0" stop-color="#ffffff"/><stop offset="0.45" stop-color="#e9ebee"/><stop offset="1" stop-color="#b4b9c1"/></linearGradient></defs>
<rect x="39" y="174" width="223" height="19" fill="#f0f0f0"/>
<rect x="64" y="175" width="174" height="16" fill="#999"/>
<g transform="translate(26,183)"><defs><linearGradient id="tg" x1="0" y1="0" x2="1" y2="1"><stop offset="0" stop-color="#fff"/><stop offset="1" stop-color="#555"/></linearGradient></defs><path d="M-5.5 5.5L5.5 -5.5V5.5Z" fill="url(#tg)" stroke="#222" stroke-width="1"/></g>
<g transform="translate(50,183)"><path d="M-8 0C-4 -5 4 -5 8 0C4 5 -4 5 -8 0Z" fill="#a8a8a8"/><circle r="3.2" fill="#f2f2f2"/><circle r="1.8" fill="#a8a8a8"/></g>
<g transform="translate(75,183)"><path d="M-7 -4L-4 -7H7V4L4 7H-7Z" fill="#dfe4ea" stroke="#333" stroke-width="1"/><path d="M4 -4L7 -7V4L4 7Z" fill="#c7ced8" stroke="#333" stroke-width="0.6"/></g>
<text x="97.5" y="187.5" font-family="Liberation Sans" font-weight="bold" font-size="11.5" fill="#fff" textLength="131" lengthAdjust="spacingAndGlyphs">MB-H50 (v51~recovered)</text>
<g transform="translate(248,183)"><circle r="6" fill="#fff" stroke="#222" stroke-width="1.2"/><circle r="2.3" fill="#222"/></g>
<rect x="57" y="197" width="121.2" height="20" fill="#f0f0f0"/>
<g transform="translate(43,207)"><path d="M-4 -6L5 0L-4 6Z" fill="#f4f4f4" stroke="#333" stroke-width="1.1" stroke-linejoin="round"/></g>
<g transform="translate(68,207)"><circle r="5.5" fill="#a0a0a0"/><circle r="2.3" fill="#f2f2f2"/><rect x="-1.6" y="-8" width="3.2" height="4" fill="#a0a0a0" transform="rotate(0)"/><rect x="-1.6" y="-8" width="3.2" height="4" fill="#a0a0a0" transform="rotate(45)"/><rect x="-1.6" y="-8" width="3.2" height="4" fill="#a0a0a0" transform="rotate(90)"/><rect x="-1.6" y="-8" width="3.2" height="4" fill="#a0a0a0" transform="rotate(135)"/><rect x="-1.6" y="-8" width="3.2" height="4" fill="#a0a0a0" transform="rotate(180)"/><rect x="-1.6" y="-8" width="3.2" height="4" fill="#a0a0a0" transform="rotate(225)"/><rect x="-1.6" y="-8" width="3.2" height="4" fill="#a0a0a0" transform="rotate(270)"/><rect x="-1.6" y="-8" width="3.2" height="4" fill="#a0a0a0" transform="rotate(315)"/></g>
<text x="90" y="211.5" font-family="Liberation Sans" font-size="11.5" fill="#222" textLength="76.8" lengthAdjust="spacingAndGlyphs">ドキュメントの設定</text>
<rect x="57" y="221" width="125.8" height="20" fill="#f0f0f0"/>
<g transform="translate(43,231)"><path d="M-4 -6L5 0L-4 6Z" fill="#f4f4f4" stroke="#333" stroke-width="1.1" stroke-linejoin="round"/></g>
<g transform="translate(68,231)"><path d="M-8 -6H-2L0 -4H8V6H-8Z" fill="#a0a0a0"/><path d="M-8 -4H8" stroke="#e8e8e8" stroke-width="0.7"/></g>
<text x="90" y="235.5" font-family="Liberation Sans" font-size="11.5" fill="#222" textLength="81.8" lengthAdjust="spacingAndGlyphs">名前の付いたビュー</text>
<rect x="57" y="245" width="90.7" height="20" fill="#f0f0f0"/>
<g transform="translate(43,255)"><path d="M-4 -6L5 0L-4 6Z" fill="#f4f4f4" stroke="#333" stroke-width="1.1" stroke-linejoin="round"/></g>
<g transform="translate(68,255)"><path d="M-8 0C-4 -5 4 -5 8 0C4 5 -4 5 -8 0Z" fill="none" stroke="#b0b0b0" stroke-width="1"/><circle r="2.5" fill="none" stroke="#b0b0b0"/><path d="M-5 -6L5 6" stroke="#a0a0a0" stroke-width="1"/></g>
<g transform="translate(94,255)"><path d="M-8 -6H-2L0 -4H8V6H-8Z" fill="#a0a0a0"/><path d="M-8 -4H8" stroke="#e8e8e8" stroke-width="0.7"/></g>
<text x="115" y="259.5" font-family="Liberation Sans" font-size="11.5" fill="#222" textLength="21.2" lengthAdjust="spacingAndGlyphs">原点</text>
<rect x="57" y="269" width="95.0" height="20" fill="#f0f0f0"/>
<g transform="translate(43,279)"><defs><linearGradient id="tg4" x1="0" y1="0" x2="1" y2="1"><stop offset="0" stop-color="#fff"/><stop offset="1" stop-color="#555"/></linearGradient></defs><path d="M-5.5 5.5L5.5 -5.5V5.5Z" fill="url(#tg4)" stroke="#222" stroke-width="1"/></g>
<g transform="translate(68,279)"><path d="M-8 0C-4 -5 4 -5 8 0C4 5 -4 5 -8 0Z" fill="#a8a8a8"/><circle r="3.2" fill="#f2f2f2"/><circle r="1.8" fill="#a8a8a8"/></g>
<g transform="translate(94,279)"><path d="M-8 -6H-2L0 -4H8V6H-8Z" fill="#a0a0a0"/><path d="M-8 -4H8" stroke="#e8e8e8" stroke-width="0.7"/></g>
<text x="115" y="283.5" font-family="Liberation Sans" font-size="11.5" fill="#222" textLength="24.5" lengthAdjust="spacingAndGlyphs">ボディ</text>
<rect x="75" y="293" width="146.6" height="20" fill="#f0f0f0"/>
<g transform="translate(86,303)"><path d="M-8 0C-4 -5 4 -5 8 0C4 5 -4 5 -8 0Z" fill="#a8a8a8"/><circle r="3.2" fill="#f2f2f2"/><circle r="1.8" fill="#a8a8a8"/></g>
<g transform="translate(111,303)"><rect x="-7.5" y="-7.5" width="15" height="15" rx="3.5" fill="url(#bodyg)" stroke="#3a3a3a" stroke-width="1.1"/><path d="M-6 -4.5H6" stroke="#e8e8e8" stroke-width="1"/></g>
<text x="133" y="307.5" font-family="Liberation Sans" font-size="11.5" fill="#222" textLength="77.0" lengthAdjust="spacingAndGlyphs">ボディ・上面ダクト</text>
<rect x="75" y="317" width="178.5" height="20" fill="#f0f0f0"/>
<g transform="translate(86,327)"><path d="M-8 0C-4 -5 4 -5 8 0C4 5 -4 5 -8 0Z" fill="#a8a8a8"/><circle r="3.2" fill="#f2f2f2"/><circle r="1.8" fill="#a8a8a8"/></g>
<g transform="translate(111,327)"><rect x="-7.5" y="-7.5" width="15" height="15" rx="3.5" fill="url(#bodyg)" stroke="#3a3a3a" stroke-width="1.1"/><path d="M-6 -4.5H6" stroke="#e8e8e8" stroke-width="1"/></g>
<text x="133" y="331.5" font-family="Liberation Sans" font-size="11.5" fill="#222" textLength="108.6" lengthAdjust="spacingAndGlyphs">ボディ・上面ダクトスリット</text>
<rect x="75" y="341" width="151.0" height="20" fill="#f0f0f0"/>
<g transform="translate(86,351)"><path d="M-8 0C-4 -5 4 -5 8 0C4 5 -4 5 -8 0Z" fill="#a8a8a8"/><circle r="3.2" fill="#f2f2f2"/><circle r="1.8" fill="#a8a8a8"/></g>
<g transform="translate(111,351)"><rect x="-7.5" y="-7.5" width="15" height="15" rx="3.5" fill="url(#bodyg)" stroke="#3a3a3a" stroke-width="1.1"/><path d="M-6 -4.5H6" stroke="#e8e8e8" stroke-width="1"/></g>
<text x="133" y="355.5" font-family="Liberation Sans" font-size="11.5" fill="#222" textLength="83.0" lengthAdjust="spacingAndGlyphs">ボディ4・底面ダクト</text>
<rect x="75" y="365" width="135.0" height="20" fill="#f0f0f0"/>
<g transform="translate(86,375)"><path d="M-8 0C-4 -5 4 -5 8 0C4 5 -4 5 -8 0Z" fill="#a8a8a8"/><circle r="3.2" fill="#f2f2f2"/><circle r="1.8" fill="#a8a8a8"/></g>
<g transform="translate(111,375)"><rect x="-7.5" y="-7.5" width="15" height="15" rx="3.5" fill="url(#bodyg)" stroke="#3a3a3a" stroke-width="1.1"/><path d="M-6 -4.5H6" stroke="#e8e8e8" stroke-width="1"/></g>
<text x="133" y="379.5" font-family="Liberation Sans" font-size="11.5" fill="#222" textLength="66.6" lengthAdjust="spacingAndGlyphs">キーボード・上面</text>
<rect x="75" y="389" width="106.6" height="20" fill="#f0f0f0"/>
<g transform="translate(86,399)"><path d="M-8 0C-4 -5 4 -5 8 0C4 5 -4 5 -8 0Z" fill="#a8a8a8"/><circle r="3.2" fill="#f2f2f2"/><circle r="1.8" fill="#a8a8a8"/></g>
<g transform="translate(111,399)"><rect x="-7.5" y="-7.5" width="15" height="15" rx="3.5" fill="url(#bodyg)" stroke="#3a3a3a" stroke-width="1.1"/><path d="M-6 -4.5H6" stroke="#e8e8e8" stroke-width="1"/></g>
<text x="133" y="403.5" font-family="Liberation Sans" font-size="11.5" fill="#222" textLength="39.0" lengthAdjust="spacingAndGlyphs">キーボード</text>
<rect x="75" y="413" width="135.0" height="20" fill="#f0f0f0"/>
<g transform="translate(86,423)"><path d="M-8 0C-4 -5 4 -5 8 0C4 5 -4 5 -8 0Z" fill="#a8a8a8"/><circle r="3.2" fill="#f2f2f2"/><circle r="1.8" fill="#a8a8a8"/></g>
<g transform="translate(111,423)"><rect x="-7.5" y="-7.5" width="15" height="15" rx="3.5" fill="url(#bodyg)" stroke="#3a3a3a" stroke-width="1.1"/><path d="M-6 -4.5H6" stroke="#e8e8e8" stroke-width="1"/></g>
<text x="133" y="427.5" font-family="Liberation Sans" font-size="11.5" fill="#222" textLength="66.6" lengthAdjust="spacingAndGlyphs">キーボード・底面</text>
<rect x="75" y="437" width="151.0" height="20" fill="#f0f0f0"/>
<g transform="translate(86,447)"><path d="M-8 0C-4 -5 4 -5 8 0C4 5 -4 5 -8 0Z" fill="#a8a8a8"/><circle r="3.2" fill="#f2f2f2"/><circle r="1.8" fill="#a8a8a8"/></g>
<g transform="translate(111,447)"><rect x="-7.5" y="-7.5" width="15" height="15" rx="3.5" fill="url(#bodyg)" stroke="#3a3a3a" stroke-width="1.1"/><path d="M-6 -4.5H6" stroke="#e8e8e8" stroke-width="1"/></g>
<text x="133" y="451.5" font-family="Liberation Sans" font-size="11.5" fill="#222" textLength="80.0" lengthAdjust="spacingAndGlyphs">ボディ・透明パネル</text>
<rect x="75" y="461" width="135.0" height="20" fill="#f0f0f0"/>
<g transform="translate(86,471)"><path d="M-8 0C-4 -5 4 -5 8 0C4 5 -4 5 -8 0Z" fill="#a8a8a8"/><circle r="3.2" fill="#f2f2f2"/><circle r="1.8" fill="#a8a8a8"/></g>
<g transform="translate(111,471)"><rect x="-7.5" y="-7.5" width="15" height="15" rx="3.5" fill="url(#bodyg)" stroke="#3a3a3a" stroke-width="1.1"/><path d="M-6 -4.5H6" stroke="#e8e8e8" stroke-width="1"/></g>
<text x="133" y="475.5" font-family="Liberation Sans" font-size="11.5" fill="#222" textLength="69.0" lengthAdjust="spacingAndGlyphs">カートリッジ蓋・1</text>
<rect x="75" y="485" width="138.5" height="20" fill="#f0f0f0"/>
<g transform="translate(86,495)"><path d="M-8 0C-4 -5 4 -5 8 0C4 5 -4 5 -8 0Z" fill="#a8a8a8"/><circle r="3.2" fill="#f2f2f2"/><circle r="1.8" fill="#a8a8a8"/></g>
<g transform="translate(111,495)"><rect x="-7.5" y="-7.5" width="15" height="15" rx="3.5" fill="url(#bodyg)" stroke="#3a3a3a" stroke-width="1.1"/><path d="M-6 -4.5H6" stroke="#e8e8e8" stroke-width="1"/></g>
<text x="133" y="499.5" font-family="Liberation Sans" font-size="11.5" fill="#222" textLength="70.0" lengthAdjust="spacingAndGlyphs">カートリッジ蓋・2</text>
<rect x="75" y="509" width="154.8" height="20" fill="#f0f0f0"/>
<g transform="translate(86,519)"><path d="M-8 0C-4 -5 4 -5 8 0C4 5 -4 5 -8 0Z" fill="#a8a8a8"/><circle r="3.2" fill="#f2f2f2"/><circle r="1.8" fill="#a8a8a8"/></g>
<g transform="translate(111,519)"><rect x="-7.5" y="-7.5" width="15" height="15" rx="3.5" fill="url(#bodyg)" stroke="#3a3a3a" stroke-width="1.1"/><path d="M-6 -4.5H6" stroke="#e8e8e8" stroke-width="1"/></g>
<text x="133" y="523.5" font-family="Liberation Sans" font-size="11.5" fill="#222" textLength="85.4" lengthAdjust="spacingAndGlyphs">ジョイスティックポート</text>
<rect x="75" y="533" width="123.0" height="20" fill="#f0f0f0"/>
<g transform="translate(86,543)"><path d="M-8 0C-4 -5 4 -5 8 0C4 5 -4 5 -8 0Z" fill="#a8a8a8"/><circle r="3.2" fill="#f2f2f2"/><circle r="1.8" fill="#a8a8a8"/></g>
<g transform="translate(111,543)"><rect x="-7.5" y="-7.5" width="15" height="15" rx="3.5" fill="url(#bodyg)" stroke="#3a3a3a" stroke-width="1.1"/><path d="M-6 -4.5H6" stroke="#e8e8e8" stroke-width="1"/></g>
<text x="133" y="547.5" font-family="Liberation Sans" font-size="11.5" fill="#222" textLength="52.7" lengthAdjust="spacingAndGlyphs">ボディ・底面</text>
<rect x="75" y="557" width="118.9" height="20" fill="#f0f0f0"/>
<g transform="translate(86,567)"><path d="M-8 0C-4 -5 4 -5 8 0C4 5 -4 5 -8 0Z" fill="#a8a8a8"/><circle r="3.2" fill="#f2f2f2"/><circle r="1.8" fill="#a8a8a8"/></g>
<g transform="translate(111,567)"><rect x="-7.5" y="-7.5" width="15" height="15" rx="3.5" fill="url(#bodyg)" stroke="#3a3a3a" stroke-width="1.1"/><path d="M-6 -4.5H6" stroke="#e8e8e8" stroke-width="1"/></g>
<text x="133" y="571.5" font-family="Liberation Sans" font-size="11.5" fill="#222" textLength="52.7" lengthAdjust="spacingAndGlyphs">ボディ・上面</text>
<rect x="75" y="581" width="146.6" height="20" fill="#f0f0f0"/>
<g transform="translate(86,591)"><path d="M-8 0C-4 -5 4 -5 8 0C4 5 -4 5 -8 0Z" fill="#a8a8a8"/><circle r="3.2" fill="#f2f2f2"/><circle r="1.8" fill="#a8a8a8"/></g>
<g transform="translate(111,591)"><rect x="-7.5" y="-7.5" width="15" height="15" rx="3.5" fill="url(#bodyg)" stroke="#3a3a3a" stroke-width="1.1"/><path d="M-6 -4.5H6" stroke="#e8e8e8" stroke-width="1"/></g>
<text x="133" y="595.5" font-family="Liberation Sans" font-size="11.5" fill="#222" textLength="78.0" lengthAdjust="spacingAndGlyphs">キーボード・コネクタ</text>
<rect x="75" y="605" width="114.8" height="20" fill="#f0f0f0"/>
<g transform="translate(86,615)"><path d="M-8 0C-4 -5 4 -5 8 0C4 5 -4 5 -8 0Z" fill="#a8a8a8"/><circle r="3.2" fill="#f2f2f2"/><circle r="1.8" fill="#a8a8a8"/></g>
<g transform="translate(111,615)"><rect x="-7.5" y="-7.5" width="15" height="15" rx="3.5" fill="url(#bodyg)" stroke="#3a3a3a" stroke-width="1.1"/><path d="M-6 -4.5H6" stroke="#e8e8e8" stroke-width="1"/></g>
<text x="133" y="619.5" font-family="Liberation Sans" font-size="11.5" fill="#222" textLength="45.4" lengthAdjust="spacingAndGlyphs">電源ポート</text>
<rect x="75" y="629" width="154.8" height="20" fill="#f0f0f0"/>
<g transform="translate(86,639)"><path d="M-8 0C-4 -5 4 -5 8 0C4 5 -4 5 -8 0Z" fill="#a8a8a8"/><circle r="3.2" fill="#f2f2f2"/><circle r="1.8" fill="#a8a8a8"/></g>
<g transform="translate(111,639)"><rect x="-7.5" y="-7.5" width="15" height="15" rx="3.5" fill="url(#bodyg)" stroke="#3a3a3a" stroke-width="1.1"/><path d="M-6 -4.5H6" stroke="#e8e8e8" stroke-width="1"/></g>
<text x="133" y="643.5" font-family="Liberation Sans" font-size="11.5" fill="#222" textLength="84.6" lengthAdjust="spacingAndGlyphs">カートリッジ・フレーム</text>
<rect x="75" y="653" width="95.2" height="20" fill="#f0f0f0"/>
<g transform="translate(86,663)"><path d="M-8 0C-4 -5 4 -5 8 0C4 5 -4 5 -8 0Z" fill="#a8a8a8"/><circle r="3.2" fill="#f2f2f2"/><circle r="1.8" fill="#a8a8a8"/></g>
<g transform="translate(111,663)"><rect x="-7.5" y="-7.5" width="15" height="15" rx="3.5" fill="url(#bodyg)" stroke="#3a3a3a" stroke-width="1.1"/><path d="M-6 -4.5H6" stroke="#e8e8e8" stroke-width="1"/></g>
<text x="133" y="667.5" font-family="Liberation Sans" font-size="11.5" fill="#222" textLength="27.4" lengthAdjust="spacingAndGlyphs">蓋・左</text>
<rect x="75" y="677" width="95.0" height="20" fill="#f0f0f0"/>
<g transform="translate(86,687)"><path d="M-8 0C-4 -5 4 -5 8 0C4 5 -4 5 -8 0Z" fill="#a8a8a8"/><circle r="3.2" fill="#f2f2f2"/><circle r="1.8" fill="#a8a8a8"/></g>
<g transform="translate(111,687)"><rect x="-7.5" y="-7.5" width="15" height="15" rx="3.5" fill="url(#bodyg)" stroke="#3a3a3a" stroke-width="1.1"/><path d="M-6 -4.5H6" stroke="#e8e8e8" stroke-width="1"/></g>
<text x="133" y="691.5" font-family="Liberation Sans" font-size="11.5" fill="#222" textLength="27.4" lengthAdjust="spacingAndGlyphs">蓋・右</text>
<rect x="75" y="701" width="123.0" height="20" fill="#f0f0f0"/>
<g transform="translate(86,711)"><path d="M-8 0C-4 -5 4 -5 8 0C4 5 -4 5 -8 0Z" fill="#a8a8a8"/><circle r="3.2" fill="#f2f2f2"/><circle r="1.8" fill="#a8a8a8"/></g>
<g transform="translate(111,711)"><rect x="-7.5" y="-7.5" width="15" height="15" rx="3.5" fill="url(#bodyg)" stroke="#3a3a3a" stroke-width="1.1"/><path d="M-6 -4.5H6" stroke="#e8e8e8" stroke-width="1"/></g>
<text x="133" y="715.5" font-family="Liberation Sans" font-size="11.5" fill="#222" textLength="53.5" lengthAdjust="spacingAndGlyphs">内部フレーム</text>
<rect x="75" y="725" width="123.0" height="20" fill="#f0f0f0"/>
<g transform="translate(86,735)"><path d="M-8 0C-4 -5 4 -5 8 0C4 5 -4 5 -8 0Z" fill="#a8a8a8"/><circle r="3.2" fill="#f2f2f2"/><circle r="1.8" fill="#a8a8a8"/></g>
<g transform="translate(111,735)"><rect x="-7.5" y="-7.5" width="15" height="15" rx="3.5" fill="url(#bodyg)" stroke="#3a3a3a" stroke-width="1.1"/><path d="M-6 -4.5H6" stroke="#e8e8e8" stroke-width="1"/></g>
<text x="133" y="739.5" font-family="Liberation Sans" font-size="11.5" fill="#222" textLength="53.5" lengthAdjust="spacingAndGlyphs">電源スイッチ</text>
<rect x="57" y="749" width="110.8" height="20" fill="#f0f0f0"/>
<g transform="translate(43,759)"><defs><linearGradient id="tg24" x1="0" y1="0" x2="1" y2="1"><stop offset="0" stop-color="#fff"/><stop offset="1" stop-color="#555"/></linearGradient></defs><path d="M-5.5 5.5L5.5 -5.5V5.5Z" fill="url(#tg24)" stroke="#222" stroke-width="1"/></g>
<g transform="translate(68,759)"><path d="M-8 0C-4 -5 4 -5 8 0C4 5 -4 5 -8 0Z" fill="#a8a8a8"/><circle r="3.2" fill="#f2f2f2"/><circle r="1.8" fill="#a8a8a8"/></g>
<g transform="translate(94,759)"><path d="M-8 -6H-2L0 -4H8V6H-8Z" fill="#a0a0a0"/><path d="M-8 -4H8" stroke="#e8e8e8" stroke-width="0.7"/></g>
<text x="115" y="763.5" font-family="Liberation Sans" font-size="11.5" fill="#222" textLength="41.3" lengthAdjust="spacingAndGlyphs">キャンバス</text>
<rect x="75" y="773" width="227.0" height="20" fill="#f0f0f0"/>
<g transform="translate(86,783)"><path d="M-8 0C-4 -5 4 -5 8 0C4 5 -4 5 -8 0Z" fill="none" stroke="#b0b0b0" stroke-width="1"/><circle r="2.5" fill="none" stroke="#b0b0b0"/><path d="M-5 -6L5 6" stroke="#a0a0a0" stroke-width="1"/></g>
<g transform="translate(111,783)"><rect x="-6.5" y="-6.5" width="13" height="13" fill="#8fbfe8" stroke="#444" stroke-width="0.8"/><path d="M-6 4L-2 -1L2 3L6 0V6H-6Z" fill="#d9d9d9"/><circle cx="3" cy="-3" r="1.6" fill="#ffe26a"/><circle cx="-3" cy="3" r="2.8" fill="none" stroke="#d22" stroke-width="1.2"/><path d="M-5 5L-1 1" stroke="#d22" stroke-width="1"/></g>
<text x="133" y="787.5" font-family="Liberation Sans" font-size="11.5" fill="#222" textLength="157.2" lengthAdjust="spacingAndGlyphs">i-img900x675-1644576182kh8ε...</text>
<rect x="75" y="797" width="186.6" height="20" fill="#f0f0f0"/>
<g transform="translate(86,807)"><path d="M-8 0C-4 -5 4 -5 8 0C4 5 -4 5 -8 0Z" fill="none" stroke="#b0b0b0" stroke-width="1"/><circle r="2.5" fill="none" stroke="#b0b0b0"/><path d="M-5 -6L5 6" stroke="#a0a0a0" stroke-width="1"/></g>
<g transform="translate(111,807)"><rect x="-6.5" y="-6.5" width="13" height="13" fill="#8fbfe8" stroke="#444" stroke-width="0.8"/><path d="M-6 4L-2 -1L2 3L6 0V6H-6Z" fill="#d9d9d9"/><circle cx="3" cy="-3" r="1.6" fill="#ffe26a"/><circle cx="-3" cy="3" r="2.8" fill="none" stroke="#d22" stroke-width="1.2"/><path d="M-5 5L-1 1" stroke="#d22" stroke-width="1"/></g>
<text x="133" y="811.5" font-family="Liberation Sans" font-size="11.5" fill="#222" textLength="117.0" lengthAdjust="spacingAndGlyphs">Hitachi_MB-H50_leftside</text>
<rect x="75" y="821" width="194.7" height="20" fill="#f0f0f0"/>
<g transform="translate(86,831)"><path d="M-8 0C-4 -5 4 -5 8 0C4 5 -4 5 -8 0Z" fill="none" stroke="#b0b0b0" stroke-width="1"/><circle r="2.5" fill="none" stroke="#b0b0b0"/><path d="M-5 -6L5 6" stroke="#a0a0a0" stroke-width="1"/></g>
<g transform="translate(111,831)"><rect x="-6.5" y="-6.5" width="13" height="13" fill="#8fbfe8" stroke="#444" stroke-width="0.8"/><path d="M-6 4L-2 -1L2 3L6 0V6H-6Z" fill="#d9d9d9"/><circle cx="3" cy="-3" r="1.6" fill="#ffe26a"/><circle cx="-3" cy="3" r="2.8" fill="none" stroke="#d22" stroke-width="1.2"/><path d="M-5 5L-1 1" stroke="#d22" stroke-width="1"/></g>
<text x="133" y="835.5" font-family="Liberation Sans" font-size="11.5" fill="#222" textLength="126.6" lengthAdjust="spacingAndGlyphs">Hitachi_MB-H50_keyboard</text>
<rect x="57" y="845" width="99.0" height="20" fill="#f0f0f0"/>
<g transform="translate(43,855)"><path d="M-4 -6L5 0L-4 6Z" fill="#f4f4f4" stroke="#333" stroke-width="1.1" stroke-linejoin="round"/></g>
<g transform="translate(68,855)"><path d="M-8 0C-4 -5 4 -5 8 0C4 5 -4 5 -8 0Z" fill="#a8a8a8"/><circle r="3.2" fill="#f2f2f2"/><circle r="1.8" fill="#a8a8a8"/></g>
<g transform="translate(94,855)"><path d="M-8 -6H-2L0 -4H8V6H-8Z" fill="#a0a0a0"/><path d="M-8 -4H8" stroke="#e8e8e8" stroke-width="0.7"/></g>
<text x="115" y="859.5" font-family="Liberation Sans" font-size="11.5" fill="#222" textLength="31.0" lengthAdjust="spacingAndGlyphs">スケッチ</text>
<rect x="57" y="869" width="138.7" height="20" fill="#f0f0f0"/>
<g transform="translate(43,879)"><path d="M-4 -6L5 0L-4 6Z" fill="#f4f4f4" stroke="#333" stroke-width="1.1" stroke-linejoin="round"/></g>
<g transform="translate(68,879)"><path d="M-8 0C-4 -5 4 -5 8 0C4 5 -4 5 -8 0Z" fill="#a8a8a8"/><circle r="3.2" fill="#f2f2f2"/><circle r="1.8" fill="#a8a8a8"/></g>
<g transform="translate(94,879)"><path d="M-8 -6H-2L0 -4H8V6H-8Z" fill="#a0a0a0"/><path d="M-8 -4H8" stroke="#e8e8e8" stroke-width="0.7"/></g>
<text x="115" y="883.5" font-family="Liberation Sans" font-size="11.5" fill="#222" textLength="72.3" lengthAdjust="spacingAndGlyphs">コンストラクション</text>
<rect x="57" y="893" width="97.7" height="20" fill="#f0f0f0"/>
<g transform="translate(68,903)"><path d="M-8 -4L-5 -7H3V5L0 8H-8Z" fill="#5aa6e4"/><path d="M0 -4L3 -7V5L0 8Z" fill="#3a7fc0"/><path d="M-8 8H0L3 5V9L0 10H-8Z" fill="#bbb"/><path d="M6 9V-7M4.5 -4L6 -8L7.5 -4" fill="none" stroke="#222" stroke-width="1"/></g>
<text x="90" y="907.5" font-family="Liberation Sans" font-size="11.5" fill="#222" textLength="56.0" lengthAdjust="spacingAndGlyphs">押し出し549</text>
<rect x="57" y="917" width="97.7" height="20" fill="#f0f0f0"/>
<g transform="translate(68,927)"><path d="M-8 -4L-5 -7H3V5L0 8H-8Z" fill="#5aa6e4"/><path d="M0 -4L3 -7V5L0 8Z" fill="#3a7fc0"/><path d="M-8 8H0L3 5V9L0 10H-8Z" fill="#bbb"/><path d="M6 9V-7M4.5 -4L6 -8L7.5 -4" fill="none" stroke="#222" stroke-width="1"/></g>
<text x="90" y="931.5" font-family="Liberation Sans" font-size="11.5" fill="#222" textLength="56.0" lengthAdjust="spacingAndGlyphs">押し出し550</text>
<rect x="57" y="941" width="97.7" height="20" fill="#f0f0f0"/>
<g transform="translate(68,951)"><path d="M-8 -4L-5 -7H3V5L0 8H-8Z" fill="#5aa6e4"/><path d="M0 -4L3 -7V5L0 8Z" fill="#3a7fc0"/><path d="M-8 8H0L3 5V9L0 10H-8Z" fill="#bbb"/><path d="M6 9V-7M4.5 -4L6 -8L7.5 -4" fill="none" stroke="#222" stroke-width="1"/></g>
<text x="90" y="955.5" font-family="Liberation Sans" font-size="11.5" fill="#222" textLength="56.0" lengthAdjust="spacingAndGlyphs">押し出し552</text>
<rect x="57" y="965" width="97.7" height="20" fill="#f0f0f0"/>
<g transform="translate(68,975)"><path d="M-8 -3L-4 -8H0C5 -8 8 -4 8 1V6L4 9H-8Z" fill="#ddd" stroke="#555" stroke-width="0.8"/><path d="M0 -8C5 -8 8 -4 8 1L4 3C4 -1 2 -4 -1 -5Z" fill="#3a8fd8"/></g>
<text x="90" y="979.5" font-family="Liberation Sans" font-size="11.5" fill="#222" textLength="56.0" lengthAdjust="spacingAndGlyphs">フィレット556</text>
</svg>
<div style="position:absolute;left:3px;top:1006px;width:300px;height:25px;background:#f2f2f2;border:1px solid #cccccc;box-sizing:border-box"></div>
<svg style="position:absolute;left:280px;top:1012px" width="14" height="14"><circle cx="6.5" cy="6.5" r="4.6" fill="#222"/><path d="M3.8 6.6H9.2M6.5 3.9V9.3" stroke="#fff" stroke-width="1.2"/></svg>
<svg style="position:absolute;left:0;top:0;pointer-events:none" width="1921" height="1041">
<text x="22" y="15.5" font-family="Liberation Sans" font-size="13" font-weight="normal" fill="#000" textLength="237.9" lengthAdjust="spacingAndGlyphs">Autodesk Fusion 360 (個人用 - 商用利用不可)</text>
<text x="426" y="44.5" font-family="Liberation Sans" font-size="12" font-weight="normal" fill="#555" textLength="23.8" lengthAdjust="spacingAndGlyphs">無題</text>
<text x="855.6" y="44.5" font-family="Liberation Sans" font-size="12" font-weight="normal" fill="#222" textLength="140.4" lengthAdjust="spacingAndGlyphs">MB-H50 (v51~recovered)*</text>
<text x="1349.2" y="44.5" font-family="Liberation Sans" font-size="12" font-weight="normal" fill="#555" textLength="130.3" lengthAdjust="spacingAndGlyphs">KimBox (v7~recovered)*</text>
<text x="1715" y="43.5" font-family="Liberation Sans" font-size="12" font-weight="normal" fill="#333" textLength="22.0" lengthAdjust="spacingAndGlyphs">7/10</text>
<text x="1781" y="43.5" font-family="Liberation Sans" font-size="12" font-weight="normal" fill="#333" textLength="6.0" lengthAdjust="spacingAndGlyphs">1</text>
<text x="43.1" y="99" font-family="Liberation Sans" font-size="12" font-weight="normal" fill="#222" textLength="33.7" lengthAdjust="spacingAndGlyphs">デザイン</text>
<text x="149.4" y="70.5" font-family="Liberation Sans" font-size="11.5" font-weight="normal" fill="#0696d7" textLength="31.8" lengthAdjust="spacingAndGlyphs">ソリッド</text>
<text x="227.5" y="70.5" font-family="Liberation Sans" font-size="11.5" font-weight="normal" fill="#333" textLength="38.7" lengthAdjust="spacingAndGlyphs">サーフェス</text>
<text x="310" y="70.5" font-family="Liberation Sans" font-size="11.5" font-weight="normal" fill="#333" textLength="31.1" lengthAdjust="spacingAndGlyphs">メッシュ</text>
<text x="388.2" y="70.5" font-family="Liberation Sans" font-size="11.5" font-weight="normal" fill="#333" textLength="31.5" lengthAdjust="spacingAndGlyphs">フォーム</text>
<text x="466.6" y="70.5" font-family="Liberation Sans" font-size="11.5" font-weight="normal" fill="#333" textLength="51.0" lengthAdjust="spacingAndGlyphs">シート メタル</text>
<text x="564.3" y="70.5" font-family="Liberation Sans" font-size="11.5" font-weight="normal" fill="#333" textLength="46.7" lengthAdjust="spacingAndGlyphs">プラスチック</text>
<text x="657.5" y="70.5" font-family="Liberation Sans" font-size="11.5" font-weight="normal" fill="#333" textLength="53.1" lengthAdjust="spacingAndGlyphs">ユーティリティ</text>
<text x="220.6" y="129.5" font-family="Liberation Sans" font-size="11.5" font-weight="normal" fill="#333" textLength="20.6" lengthAdjust="spacingAndGlyphs">作成</text>
<path d="M245.2 123.5H251.2L248.2 127.5Z" fill="#333"/>
<text x="467.3" y="129.5" font-family="Liberation Sans" font-size="11.5" font-weight="normal" fill="#333" textLength="20.5" lengthAdjust="spacingAndGlyphs">修正</text>
<path d="M491.8 123.5H497.8L494.8 127.5Z" fill="#333"/>
<text x="641.5" y="129.5" font-family="Liberation Sans" font-size="11.5" font-weight="normal" fill="#333" textLength="40.8" lengthAdjust="spacingAndGlyphs">アセンブリ</text>
<path d="M686.3 123.5H692.3L689.3 127.5Z" fill="#333"/>
<text x="731" y="129.5" font-family="Liberation Sans" font-size="11.5" font-weight="normal" fill="#333" textLength="22.0" lengthAdjust="spacingAndGlyphs">構築</text>
<path d="M757.0 123.5H763.0L760.0 127.5Z" fill="#333"/>
<text x="789.3" y="129.5" font-family="Liberation Sans" font-size="11.5" font-weight="normal" fill="#333" textLength="21.3" lengthAdjust="spacingAndGlyphs">検査</text>
<path d="M814.6 123.5H820.6L817.6 127.5Z" fill="#333"/>
<text x="848.6" y="129.5" font-family="Liberation Sans" font-size="11.5" font-weight="normal" fill="#333" textLength="20.4" lengthAdjust="spacingAndGlyphs">挿入</text>
<path d="M873.0 123.5H879.0L876.0 127.5Z" fill="#333"/>
<text x="907" y="129.5" font-family="Liberation Sans" font-size="11.5" font-weight="normal" fill="#333" textLength="21.3" lengthAdjust="spacingAndGlyphs">選択</text>
<path d="M932.3 123.5H938.3L935.3 127.5Z" fill="#333"/>
<text x="28.1" y="159" font-family="Liberation Sans" font-size="11" font-weight="normal" fill="#555" textLength="32.8" lengthAdjust="spacingAndGlyphs">ブラウザ</text>
<text x="28.8" y="1022.5" font-family="Liberation Sans" font-size="11" font-weight="normal" fill="#555" textLength="30.5" lengthAdjust="spacingAndGlyphs">コメント</text>
</svg>
<div style="position:absolute;left:0;top:1035px;width:1919px;height:3px;background:#f0f0f0"></div>
<div style="position:absolute;left:0;top:1039px;width:1921px;height:2px;background:#0a0a0a"></div>
</body></html>
